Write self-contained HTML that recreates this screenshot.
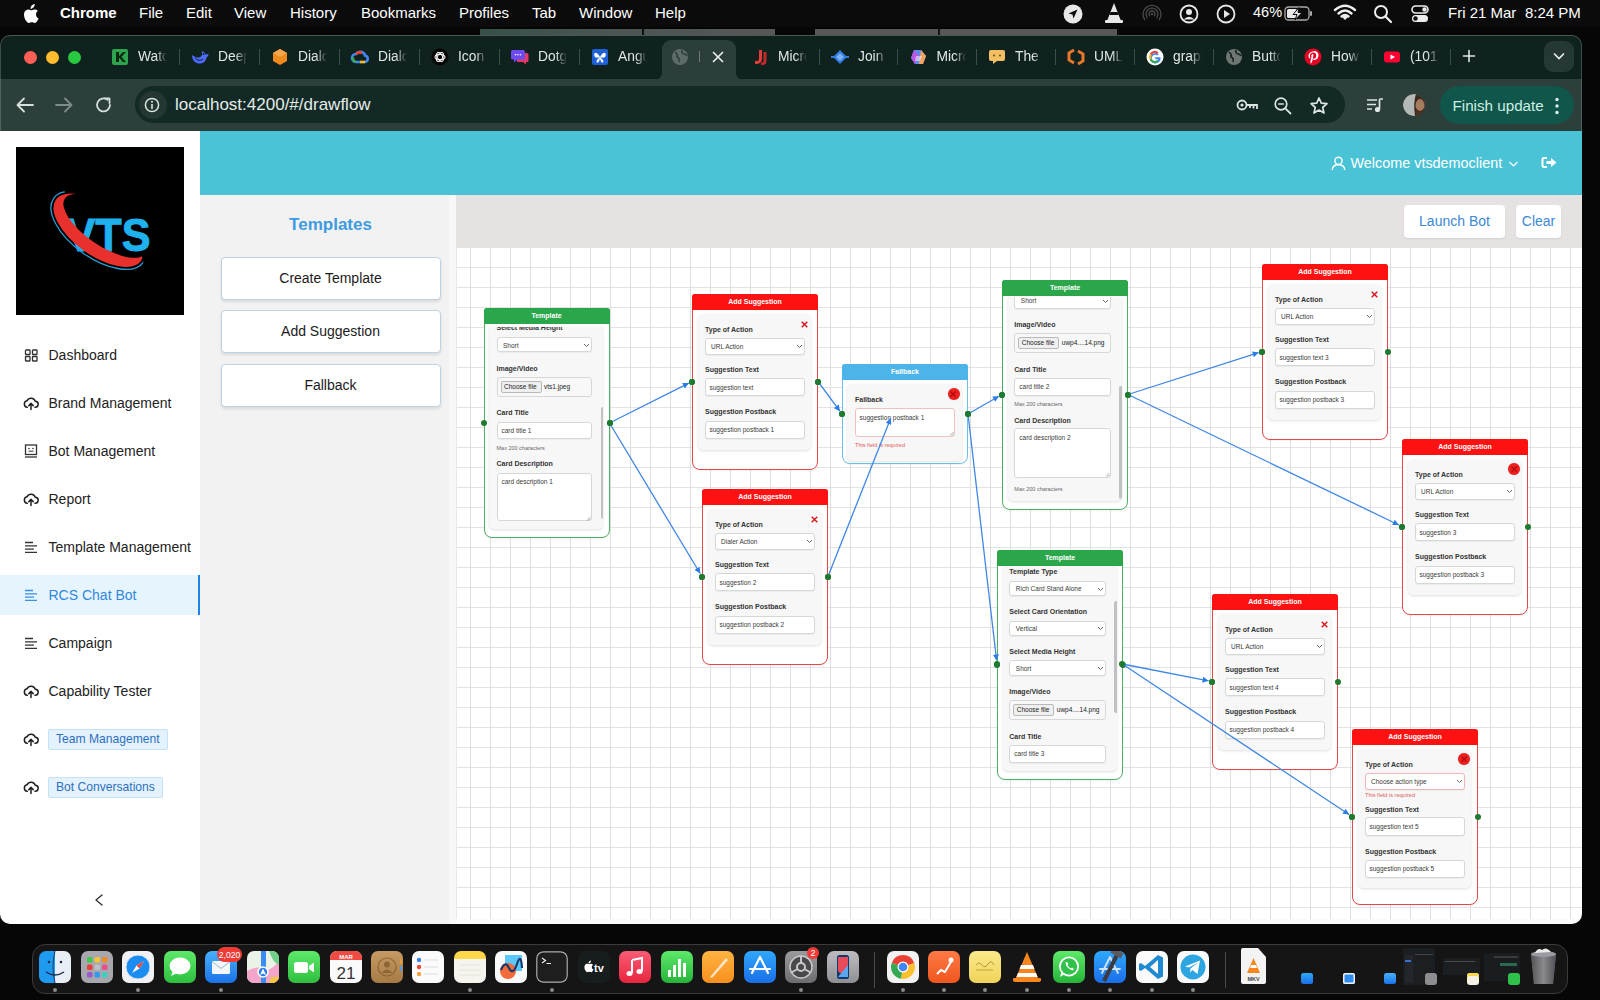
<!DOCTYPE html>
<html><head><meta charset="utf-8">
<style>
*{box-sizing:border-box;margin:0;padding:0}
html,body{width:1600px;height:1000px;overflow:hidden;background:#060606;font-family:"Liberation Sans",sans-serif;position:relative}
.a,.t{position:absolute}
.t{white-space:nowrap}
svg.a{overflow:visible}
#win{position:absolute;left:0;top:0;width:1582px;height:924px;clip-path:inset(35px 0 0 0 round 10px)}
</style></head><body>
<div class="a" style="left:0px;top:0px;width:1600px;height:27px;background:#0b0b0b"></div>
<div class="a" style="left:480px;top:29px;width:295px;height:6px;background:linear-gradient(90deg,#36504a,#4a5553 40%,#575757)"></div>
<div class="a" style="left:642px;top:29px;width:2px;height:6px;background:#111"></div>
<div class="a" style="left:815px;top:29px;width:302px;height:6px;background:#585858"></div>
<div class="a" style="left:938px;top:29px;width:2px;height:6px;background:#161616"></div>
<svg class="a" style="left:21px;top:4px;" width="18" height="20" viewBox="0 0 18 20"><path fill="#fff" d="M12.600 3.200c.8-1 1.300-2.200 1.200-3.200-1.100.1-2.300.7-3.100 1.600-.7.8-1.300 2-1.100 3.100 1.100.1 2.300-.6 3-1.500zM15 10.400c0-2.200 1.800-3.200 1.900-3.300-1-1.500-2.600-1.700-3.200-1.700-1.400-.1-2.600.8-3.300.8-.7 0-1.700-.8-2.900-.8C6 5.400 4.600 6.300 3.800 7.600c-1.600 2.800-.4 6.900 1.200 9.100.8 1.100 1.700 2.300 2.900 2.300 1.100 0 1.600-.7 2.900-.7 1.400 0 1.700.7 2.900.7 1.200 0 2-1.100 2.700-2.200.9-1.200 1.200-2.400 1.200-2.500-.1 0-2.600-1-2.600-3.900z"/></svg>
<div class="t" style="left:60px;top:4.90px;font-size:15px;line-height:15px;color:#fff;font-weight:bold;">Chrome</div>
<div class="t" style="left:139px;top:4.90px;font-size:15px;line-height:15px;color:#fff;font-weight:normal;">File</div>
<div class="t" style="left:186px;top:4.90px;font-size:15px;line-height:15px;color:#fff;font-weight:normal;">Edit</div>
<div class="t" style="left:234px;top:4.90px;font-size:15px;line-height:15px;color:#fff;font-weight:normal;">View</div>
<div class="t" style="left:290px;top:4.90px;font-size:15px;line-height:15px;color:#fff;font-weight:normal;">History</div>
<div class="t" style="left:361px;top:4.90px;font-size:15px;line-height:15px;color:#fff;font-weight:normal;">Bookmarks</div>
<div class="t" style="left:459px;top:4.90px;font-size:15px;line-height:15px;color:#fff;font-weight:normal;">Profiles</div>
<div class="t" style="left:532px;top:4.90px;font-size:15px;line-height:15px;color:#fff;font-weight:normal;">Tab</div>
<div class="t" style="left:579px;top:4.90px;font-size:15px;line-height:15px;color:#fff;font-weight:normal;">Window</div>
<div class="t" style="left:655px;top:4.90px;font-size:15px;line-height:15px;color:#fff;font-weight:normal;">Help</div>
<svg class="a" style="left:1062px;top:3px;" width="22" height="22" viewBox="0 0 22 22"><circle cx="11" cy="11" r="9.500" fill="#e8e8e8"/><path d="M15.500 6.500 L6.500 10.500 L10.500 11.500 L11.500 15.500 Z" fill="#0b0b0b"/></svg>
<svg class="a" style="left:1104px;top:2px;" width="20" height="23" viewBox="0 0 20 23"><path d="M10 1 L3 19 L17 19 Z" fill="#e8e8e8"/><path d="M6.500 10 L13.500 10 L14.500 13 L5.500 13 Z" fill="#0b0b0b"/><rect x="1" y="18" width="18" height="3" rx="1" fill="#e8e8e8"/></svg>
<svg class="a" style="left:1141px;top:3px;" width="22" height="22" viewBox="0 0 22 22"><g fill="none" stroke="#4a4a4a" stroke-width="1.300"><path d="M4 17 A9 9 0 1 1 18 17"/><path d="M6.500 15 A6 6 0 1 1 15.500 15"/><path d="M9 13 A3 3 0 1 1 13 13"/></g><circle cx="11" cy="11" r="1.200" fill="#4a4a4a"/></svg>
<svg class="a" style="left:1178px;top:3px;" width="22" height="22" viewBox="0 0 22 22"><circle cx="11" cy="11" r="8.500" fill="none" stroke="#e8e8e8" stroke-width="1.800"/><circle cx="11" cy="9" r="3" fill="#e8e8e8"/><path d="M5.500 16.500 Q11 11 16.500 16.500" fill="#e8e8e8"/></svg>
<svg class="a" style="left:1215px;top:3px;" width="22" height="22" viewBox="0 0 22 22"><circle cx="11" cy="11" r="8.500" fill="none" stroke="#e8e8e8" stroke-width="1.800"/><path d="M9 7 L15 11 L9 15 Z" fill="#e8e8e8"/></svg>
<div class="t" style="left:1253px;top:5.33px;font-size:14.5px;line-height:14.5px;color:#fff;font-weight:normal;">46%</div>
<svg class="a" style="left:1284px;top:5px;" width="30" height="17" viewBox="0 0 30 17"><rect x="1" y="2" width="24" height="13" rx="3.500" fill="none" stroke="#aaa" stroke-width="1.300"/><rect x="3" y="4" width="10" height="9" rx="1.500" fill="#e8e8e8"/><rect x="26" y="6" width="2" height="5" rx="1" fill="#aaa"/><path d="M15 2.500 L9 9.500 L13 9.500 L11 15 L18 7.500 L14 7.500 Z" fill="#e8e8e8" stroke="#0b0b0b" stroke-width="1"/></svg>
<svg class="a" style="left:1333px;top:4px;" width="24" height="18" viewBox="0 0 24 18"><path d="M12 16 L9 13 Q12 10.500 15 13 Z" fill="#eee"/><path d="M5.500 9.500 Q12 3.500 18.500 9.500" stroke="#eee" stroke-width="2.400" fill="none" stroke-linecap="round"/><path d="M2 6 Q12 -2.500 22 6" stroke="#eee" stroke-width="2.400" fill="none" stroke-linecap="round"/><path d="M8.500 12.500 Q12 9.500 15.500 12.500" stroke="#eee" stroke-width="2.400" fill="none" stroke-linecap="round"/></svg>
<svg class="a" style="left:1373px;top:4px;" width="20" height="20" viewBox="0 0 20 20"><circle cx="8" cy="8" r="6" fill="none" stroke="#eee" stroke-width="2"/><path d="M12.500 12.500 L18 18" stroke="#eee" stroke-width="2.200" stroke-linecap="round"/></svg>
<svg class="a" style="left:1410px;top:4px;" width="20" height="20" viewBox="0 0 20 20"><rect x="2" y="2" width="16" height="7" rx="3.500" fill="none" stroke="#eee" stroke-width="1.600"/><circle cx="14.500" cy="5.500" r="2.200" fill="#eee"/><rect x="2" y="11" width="16" height="7" rx="3.500" fill="#eee"/><circle cx="5.500" cy="14.500" r="2.200" fill="#0b0b0b"/></svg>
<div class="t" style="left:1448px;top:4.90px;font-size:15px;line-height:15px;color:#fff;font-weight:normal;">Fri 21 Mar</div>
<div class="t" style="left:1525px;top:4.90px;font-size:15px;line-height:15px;color:#fff;font-weight:normal;">8:24 PM</div>
<div id="win">
<div class="a" style="left:0px;top:35px;width:1582px;height:45px;background:#10221e;border-radius:10px 10px 0 0;box-shadow:inset 0 1px 0 #4a5754, inset 1px 0 0 #3c4e4a, inset -1px 0 0 #3c4e4a"></div>
<div class="a" style="left:23.5px;top:50.5px;width:13px;height:13px;background:#fe5f57;border-radius:50%"></div>
<div class="a" style="left:45.5px;top:50.5px;width:13px;height:13px;background:#febc2e;border-radius:50%"></div>
<div class="a" style="left:67.5px;top:50.5px;width:13px;height:13px;background:#28c840;border-radius:50%"></div>
<svg class="a" style="left:111px;top:48px;" width="18" height="18" viewBox="0 0 18 18"><rect x="1" y="1" width="16" height="16" rx="2" fill="#2ea44f"/><path d="M5 4h3v4l4-4h3l-4.5 5L15 14h-3.2L8 9.5V14H5z" fill="#0a2a10"/></svg>
<div class="t" style="left:138px;top:49.82px;font-size:13.8px;line-height:13.8px;color:#dfe7e4;font-weight:normal;width:29px;overflow:hidden;white-space:nowrap;-webkit-mask-image:linear-gradient(to right,#000 62%,transparent 100%)">Watch</div>
<svg class="a" style="left:191px;top:48px;" width="18" height="18" viewBox="0 0 18 18"><path d="M1 7 C1 13 5 16 10 15.500 C13 15 15 12.500 15.500 9.500 C16.500 9 17.500 7.500 17.500 5.500 C16.500 6.500 15.500 6.800 14.500 6.500 C14 4.500 12.500 3 10.500 3.500 C11.500 5 11.500 7 10 8.500 C8 10.500 4 9.500 1 7Z" fill="#4d6bfe"/><path d="M4 9.500 C6 13 10 13 12 11" stroke="#10221e" stroke-width="1" fill="none"/><circle cx="12.500" cy="6" r=".9" fill="#10221e"/></svg>
<div class="t" style="left:218px;top:49.82px;font-size:13.8px;line-height:13.8px;color:#dfe7e4;font-weight:normal;width:29px;overflow:hidden;white-space:nowrap;-webkit-mask-image:linear-gradient(to right,#000 62%,transparent 100%)">Deeps</div>
<svg class="a" style="left:271px;top:48px;" width="18" height="18" viewBox="0 0 18 18"><path d="M9 1 L16 5 L16 13 L9 17 L2 13 L2 5 Z" fill="#ef8a1c"/><path d="M2 5 L9 9 L16 5 L9 1Z" fill="#f7a64b"/></svg>
<div class="t" style="left:298px;top:49.82px;font-size:13.8px;line-height:13.8px;color:#dfe7e4;font-weight:normal;width:29px;overflow:hidden;white-space:nowrap;-webkit-mask-image:linear-gradient(to right,#000 62%,transparent 100%)">Dialog</div>
<svg class="a" style="left:351px;top:48px;" width="18" height="18" viewBox="0 0 18 18"><path d="M5 14 a4 4 0 0 1 0-8 a5 5 0 0 1 9 1.500 a3.300 3.300 0 0 1 0 6.500Z" fill="none" stroke="#4285f4" stroke-width="2.6"/><path d="M5 14 a4 4 0 0 1-3-5" stroke="#34a853" stroke-width="2.6" fill="none"/><path d="M5 6 a5 5 0 0 1 6-1" stroke="#ea4335" stroke-width="2.600" fill="none"/><path d="M14 14 h-5" stroke="#fbbc04" stroke-width="2.600"/></svg>
<div class="t" style="left:378px;top:49.82px;font-size:13.8px;line-height:13.8px;color:#dfe7e4;font-weight:normal;width:29px;overflow:hidden;white-space:nowrap;-webkit-mask-image:linear-gradient(to right,#000 62%,transparent 100%)">Dialog</div>
<svg class="a" style="left:431px;top:48px;" width="18" height="18" viewBox="0 0 18 18"><circle cx="9" cy="9" r="8.500" fill="#050505"/><g fill="none" stroke="#eee" stroke-width="1.100"><ellipse cx="9" cy="9" rx="5" ry="2.600"/><ellipse cx="9" cy="9" rx="5" ry="2.600" transform="rotate(60 9 9)"/><ellipse cx="9" cy="9" rx="5" ry="2.600" transform="rotate(120 9 9)"/></g></svg>
<div class="t" style="left:458px;top:49.82px;font-size:13.8px;line-height:13.8px;color:#dfe7e4;font-weight:normal;width:29px;overflow:hidden;white-space:nowrap;-webkit-mask-image:linear-gradient(to right,#000 62%,transparent 100%)">Icon </div>
<svg class="a" style="left:511px;top:48px;" width="18" height="18" viewBox="0 0 18 18"><path d="M6 5 h10 a1.500 1.500 0 0 1 1.500 1.500 v6 a1.500 1.500 0 0 1-1.500 1.500 h-1 v2.500 l-3-2.500 h-6z" fill="#e6396b"/><path d="M1.500 2 h11 a1.500 1.500 0 0 1 1.500 1.500 v6.500 a1.500 1.500 0 0 1-1.500 1.500 h-6 l-3.500 3 v-3 h-1.500 a1.500 1.500 0 0 1-1.500-1.500 v-6.500 a1.500 1.500 0 0 1 1.500-1.500z" fill="#6c4cf0"/><circle cx="4.500" cy="6.800" r=".8" fill="#fff"/><circle cx="7" cy="6.800" r=".8" fill="#fff"/><circle cx="9.500" cy="6.800" r=".8" fill="#fff"/></svg>
<div class="t" style="left:538px;top:49.82px;font-size:13.8px;line-height:13.8px;color:#dfe7e4;font-weight:normal;width:29px;overflow:hidden;white-space:nowrap;-webkit-mask-image:linear-gradient(to right,#000 62%,transparent 100%)">Dotgo</div>
<svg class="a" style="left:591px;top:48px;" width="18" height="18" viewBox="0 0 18 18"><rect x="1" y="1" width="16" height="16" rx="2" fill="#1d5fd6"/><path d="M9 9 C6 3 2 4 3.500 8 C4 10 6 10 9 9 C6 11 4 15 7 14.500 C8.500 14 9 11 9 9 C9 11 9.500 14 11 14.500 C14 15 12 11 9 9 C12 10 14 10 14.500 8 C16 4 12 3 9 9Z" fill="#fff"/></svg>
<div class="t" style="left:618px;top:49.82px;font-size:13.8px;line-height:13.8px;color:#dfe7e4;font-weight:normal;width:29px;overflow:hidden;white-space:nowrap;-webkit-mask-image:linear-gradient(to right,#000 62%,transparent 100%)">Angul</div>
<svg class="a" style="left:751px;top:48px;" width="18" height="18" viewBox="0 0 18 18"><path d="M8 2 h3 v9 a5 5 0 0 1-5 5 h-2 v-3 h2 a2 2 0 0 0 2-2z" fill="#e23b3b"/><path d="M12.500 4 h3 v9 a4 4 0 0 1-4 4 h-1.500 v-2.500 h1 a1.500 1.500 0 0 0 1.500-1.500z" fill="#c12a2a"/></svg>
<div class="t" style="left:778px;top:49.82px;font-size:13.8px;line-height:13.8px;color:#dfe7e4;font-weight:normal;width:29px;overflow:hidden;white-space:nowrap;-webkit-mask-image:linear-gradient(to right,#000 62%,transparent 100%)">Micro</div>
<svg class="a" style="left:831px;top:48px;" width="18" height="18" viewBox="0 0 18 18"><path d="M9 2 L16 9 L9 16 L2 9Z" fill="#2f7de1"/><path d="M5 9 L9 5 L13 9 L9 13Z" fill="#7fb2f5"/><path d="M0 9 h4 M14 9 h4" stroke="#2f7de1" stroke-width="2"/></svg>
<div class="t" style="left:858px;top:49.82px;font-size:13.8px;line-height:13.8px;color:#dfe7e4;font-weight:normal;width:29px;overflow:hidden;white-space:nowrap;-webkit-mask-image:linear-gradient(to right,#000 62%,transparent 100%)">Join </div>
<svg class="a" style="left:909.5px;top:48px;" width="18" height="18" viewBox="0 0 18 18"><path d="M4 2 h7 l5 6 -3 8 h-8 l-4-6z" fill="#5b8def"/><path d="M11 2 l5 6 -3 8 h-4z" fill="#f5a25d"/><path d="M4 2 l-3 8 4 6 4-8z" fill="#b857e6"/><path d="M6 8 h6 l-2 5 h-5z" fill="#fff" opacity=".5"/></svg>
<div class="t" style="left:936.5px;top:49.82px;font-size:13.8px;line-height:13.8px;color:#dfe7e4;font-weight:normal;width:29px;overflow:hidden;white-space:nowrap;-webkit-mask-image:linear-gradient(to right,#000 62%,transparent 100%)">Micro</div>
<svg class="a" style="left:988px;top:48px;" width="18" height="18" viewBox="0 0 18 18"><path d="M3 2 h12 a2 2 0 0 1 2 2 v7 a2 2 0 0 1-2 2 h-6 l-4 3 v-3 h-2 a2 2 0 0 1-2-2 v-7 a2 2 0 0 1 2-2z" fill="#f2c062"/><circle cx="6" cy="7.500" r="1" fill="#6b4a10"/><circle cx="12" cy="7.500" r="1" fill="#6b4a10"/></svg>
<div class="t" style="left:1015px;top:49.82px;font-size:13.8px;line-height:13.8px;color:#dfe7e4;font-weight:normal;width:29px;overflow:hidden;white-space:nowrap;-webkit-mask-image:linear-gradient(to right,#000 62%,transparent 100%)">The </div>
<svg class="a" style="left:1067px;top:48px;" width="18" height="18" viewBox="0 0 18 18"><path d="M7 2 L2 5 L2 12 L7 15" stroke="#e8762b" stroke-width="3" fill="none"/><path d="M11 3 L16 6 L16 13 L11 16" stroke="#e8762b" stroke-width="3" fill="none"/></svg>
<div class="t" style="left:1094px;top:49.82px;font-size:13.8px;line-height:13.8px;color:#dfe7e4;font-weight:normal;width:29px;overflow:hidden;white-space:nowrap;-webkit-mask-image:linear-gradient(to right,#000 62%,transparent 100%)">UML </div>
<svg class="a" style="left:1146px;top:48px;" width="18" height="18" viewBox="0 0 18 18"><circle cx="9" cy="9" r="8.500" fill="#fff"/><path d="M14.500 9.200 h-5.300 v2 h3 a3.300 3.300 0 1 1-.900-3.600 l1.400-1.400 a5.300 5.300 0 1 0 1.800 3z" fill="#4285f4"/><path d="M3.700 6.300 a5.300 5.300 0 0 1 8.800-1.800 l-1.400 1.400 a3.300 3.300 0 0 0-5.500 1.200z" fill="#ea4335"/><path d="M3.700 11.700 a5.300 5.300 0 0 1 0-5.400 l1.900 .8 a3.300 3.300 0 0 0 0 3.800z" fill="#fbbc04"/><path d="M12.500 13.500 a5.300 5.300 0 0 1-8.800-1.800 l1.900-.8 a3.300 3.300 0 0 0 5.400 1.200z" fill="#34a853"/></svg>
<div class="t" style="left:1173px;top:49.82px;font-size:13.8px;line-height:13.8px;color:#dfe7e4;font-weight:normal;width:29px;overflow:hidden;white-space:nowrap;-webkit-mask-image:linear-gradient(to right,#000 62%,transparent 100%)">graph</div>
<svg class="a" style="left:1225px;top:48px;" width="18" height="18" viewBox="0 0 18 18"><circle cx="9" cy="9" r="8" fill="#6e7674"/><path d="M4 4 q3 2 2 5 q3 1 2 5 M11 2 q-1 3 2 4 q2 0 3 2" stroke="#10221e" stroke-width="1.500" fill="none"/></svg>
<div class="t" style="left:1252px;top:49.82px;font-size:13.8px;line-height:13.8px;color:#dfe7e4;font-weight:normal;width:29px;overflow:hidden;white-space:nowrap;-webkit-mask-image:linear-gradient(to right,#000 62%,transparent 100%)">Butto</div>
<svg class="a" style="left:1304px;top:48px;" width="18" height="18" viewBox="0 0 18 18"><circle cx="9" cy="9" r="8.500" fill="#e60023"/><path d="M9.500 3.500 c-3.500 0-5 2.500-5 4.500 0 1.200.500 2.300 1.500 2.600 l.400-1.300 c-.300-.400-.500-.900-.500-1.400 0-1.800 1.300-3.300 3.400-3.300 1.900 0 2.900 1.100 2.900 2.600 0 2-.900 3.600-2.200 3.600-.700 0-1.300-.600-1.100-1.400.200-.900.600-1.900.600-2.500 0-.600-.300-1-.900-1-.700 0-1.300.800-1.300 1.800 0 .600.200 1.100.200 1.100 l-.900 3.700 c-.200 1-.100 2.200 0 3 l.300 .100 c.400-.600 1.200-1.800 1.400-2.700 l.500-1.900 c.300 .500 1 .900 1.800.900 2.300 0 3.900-2.100 3.900-4.900 0-2.100-1.800-4.100-4.600-4.100z" fill="#fff"/></svg>
<div class="t" style="left:1331px;top:49.82px;font-size:13.8px;line-height:13.8px;color:#dfe7e4;font-weight:normal;width:29px;overflow:hidden;white-space:nowrap;-webkit-mask-image:linear-gradient(to right,#000 62%,transparent 100%)">How </div>
<svg class="a" style="left:1383px;top:48px;" width="18" height="18" viewBox="0 0 18 18"><rect x="1" y="3.500" width="16" height="11" rx="3" fill="#ff0033"/><path d="M7.500 6.500 L12 9 L7.500 11.500Z" fill="#fff"/></svg>
<div class="t" style="left:1410px;top:49.82px;font-size:13.8px;line-height:13.8px;color:#dfe7e4;font-weight:normal;width:29px;overflow:hidden;white-space:nowrap;-webkit-mask-image:linear-gradient(to right,#000 62%,transparent 100%)">(101)</div>
<div class="a" style="left:179px;top:49px;width:1px;height:16px;background:#3c4e4a"></div>
<div class="a" style="left:259px;top:49px;width:1px;height:16px;background:#3c4e4a"></div>
<div class="a" style="left:339px;top:49px;width:1px;height:16px;background:#3c4e4a"></div>
<div class="a" style="left:419px;top:49px;width:1px;height:16px;background:#3c4e4a"></div>
<div class="a" style="left:499px;top:49px;width:1px;height:16px;background:#3c4e4a"></div>
<div class="a" style="left:579px;top:49px;width:1px;height:16px;background:#3c4e4a"></div>
<div class="a" style="left:819px;top:49px;width:1px;height:16px;background:#3c4e4a"></div>
<div class="a" style="left:897px;top:49px;width:1px;height:16px;background:#3c4e4a"></div>
<div class="a" style="left:976px;top:49px;width:1px;height:16px;background:#3c4e4a"></div>
<div class="a" style="left:1055px;top:49px;width:1px;height:16px;background:#3c4e4a"></div>
<div class="a" style="left:1134px;top:49px;width:1px;height:16px;background:#3c4e4a"></div>
<div class="a" style="left:1213px;top:49px;width:1px;height:16px;background:#3c4e4a"></div>
<div class="a" style="left:1292px;top:49px;width:1px;height:16px;background:#3c4e4a"></div>
<div class="a" style="left:1371px;top:49px;width:1px;height:16px;background:#3c4e4a"></div>
<div class="a" style="left:1450px;top:49px;width:1px;height:16px;background:#3c4e4a"></div>
<div class="a" style="left:662px;top:40px;width:74px;height:40px;background:#2b3e3a;border-radius:9px 9px 0 0"></div>
<div class="a" style="left:654px;top:72px;width:8px;height:8px;background:radial-gradient(circle at 0 0,#10221e 8px,#2b3e3a 8px)"></div>
<div class="a" style="left:736px;top:72px;width:8px;height:8px;background:radial-gradient(circle at 100% 0,#10221e 8px,#2b3e3a 8px)"></div>
<svg class="a" style="left:671px;top:48px;" width="18" height="18" viewBox="0 0 18 18"><circle cx="9" cy="9" r="8" fill="#5f6b68"/><path d="M4 4 q3 2 2 5 q3 1 2 5 M11 2 q-1 3 2 4 q2 0 3 2" stroke="#2b3e3a" stroke-width="1.500" fill="none"/></svg>
<div class="a" style="left:699px;top:51px;width:1px;height:11px;background:#6a7a76"></div>
<svg class="a" style="left:711px;top:50px;" width="14" height="14" viewBox="0 0 14 14"><path d="M2.500 2.500 L11.500 11.500 M11.500 2.500 L2.500 11.500" stroke="#e8eeec" stroke-width="1.700" stroke-linecap="round"/></svg>
<svg class="a" style="left:1462px;top:49px;" width="14" height="14" viewBox="0 0 14 14"><path d="M7 1.500 V12.500 M1.500 7 H12.500" stroke="#e0e8e5" stroke-width="1.600" stroke-linecap="round"/></svg>
<div class="a" style="left:1544px;top:41px;width:30px;height:31px;background:#263834;border-radius:9px"></div>
<svg class="a" style="left:1552px;top:50px;" width="14" height="12" viewBox="0 0 14 12"><path d="M2.500 4 L7 8.500 L11.500 4" stroke="#e8eeec" stroke-width="1.700" fill="none" stroke-linecap="round"/></svg>
<div class="a" style="left:0px;top:79px;width:1582px;height:52px;background:#2c3f3b;box-shadow:inset 1px 0 0 #4f625d, inset -1px 0 0 #4f625d"></div>
<svg class="a" style="left:14px;top:95px;" width="22" height="20" viewBox="0 0 22 20"><path d="M19 10 H4 M10 3.500 L3.500 10 L10 16.500" stroke="#d6e0dd" stroke-width="1.800" fill="none" stroke-linecap="round" stroke-linejoin="round"/></svg>
<svg class="a" style="left:53px;top:95px;" width="22" height="20" viewBox="0 0 22 20"><path d="M3 10 H18 M12 3.500 L18.500 10 L12 16.500" stroke="#7e8c89" stroke-width="1.800" fill="none" stroke-linecap="round" stroke-linejoin="round"/></svg>
<svg class="a" style="left:94px;top:95px;" width="20" height="20" viewBox="0 0 20 20"><path d="M16 10 A6.500 6.500 0 1 1 13.600 4.900" stroke="#d6e0dd" stroke-width="1.800" fill="none" stroke-linecap="round"/><path d="M10.500 3.300 L15.500 3.300 L15.500 8" stroke="#d6e0dd" stroke-width="1.800" fill="none" stroke-linecap="round" stroke-linejoin="round"/></svg>
<div class="a" style="left:135px;top:86px;width:1210px;height:37px;background:#132925;border-radius:19px"></div>
<div class="a" style="left:138.5px;top:90.5px;width:28px;height:28px;background:#243732;border-radius:50%"></div>
<svg class="a" style="left:144px;top:97px;" width="16" height="16" viewBox="0 0 16 16"><circle cx="8" cy="8" r="6.600" fill="none" stroke="#dbe5e2" stroke-width="1.500"/><rect x="7.200" y="7" width="1.600" height="5" fill="#dbe5e2"/><circle cx="8" cy="4.800" r="1" fill="#dbe5e2"/></svg>
<div class="t" style="left:175px;top:96.11px;font-size:17px;line-height:17px;color:#e4ece9;font-weight:normal;">localhost:4200/#/drawflow</div>
<svg class="a" style="left:1236px;top:97px;" width="24" height="16" viewBox="0 0 24 16"><circle cx="6" cy="8" r="4.500" fill="none" stroke="#dbe5e2" stroke-width="1.800"/><circle cx="6" cy="8" r="1.600" fill="#dbe5e2"/><path d="M10.500 8 H21 V12 M17.500 8 V11.500 M14 8 V11" stroke="#dbe5e2" stroke-width="1.800" fill="none"/></svg>
<svg class="a" style="left:1273px;top:96px;" width="20" height="20" viewBox="0 0 20 20"><circle cx="8" cy="8" r="5.800" fill="none" stroke="#dbe5e2" stroke-width="1.700"/><path d="M5.200 8 H10.800" stroke="#dbe5e2" stroke-width="1.700"/><path d="M12.300 12.300 L17.500 17.500" stroke="#dbe5e2" stroke-width="1.800" stroke-linecap="round"/></svg>
<svg class="a" style="left:1309px;top:96px;" width="20" height="20" viewBox="0 0 20 20"><path d="M10 2 L12.300 7.200 L18 7.700 L13.700 11.500 L15 17 L10 14.100 L5 17 L6.300 11.500 L2 7.700 L7.700 7.200 Z" fill="none" stroke="#dbe5e2" stroke-width="1.700" stroke-linejoin="round"/></svg>
<svg class="a" style="left:1365px;top:96px;" width="20" height="18" viewBox="0 0 20 18"><path d="M2 4 H12 M2 8.500 H11 M2 13 H7" stroke="#dbe5e2" stroke-width="1.700"/><path d="M14.500 3 V13" stroke="#dbe5e2" stroke-width="1.700"/><path d="M14.500 3 H18" stroke="#dbe5e2" stroke-width="1.700"/><circle cx="12.500" cy="13.500" r="2.600" fill="#dbe5e2"/></svg>
<svg class="a" style="left:1403px;top:94px;" width="22" height="22" viewBox="0 0 22 22"><defs><clipPath id="avc"><circle cx="11" cy="11" r="11"/></clipPath></defs><g clip-path="url(#avc)"><rect width="22" height="22" fill="#2c3f3b"/><circle cx="11" cy="11" r="11" fill="#b4b8b6"/><path d="M13 0 Q10 8 12 22 H22 V0Z" fill="#3a2a20"/><ellipse cx="17" cy="11.500" rx="4.500" ry="6.500" fill="#a67c5f"/><path d="M13 14 Q17 20 21 14 V22 H13Z" fill="#4a2f22"/></g></svg>
<div class="a" style="left:1440px;top:86px;width:134px;height:38px;background:#10564a;border-radius:19px"></div>
<div class="t" style="left:1452.5px;top:97.63px;font-size:15.2px;line-height:15.2px;color:#cdeee4;font-weight:normal;">Finish update</div>
<svg class="a" style="left:1553px;top:96px;" width="8" height="20" viewBox="0 0 8 20"><circle cx="4" cy="3.500" r="1.700" fill="#d7efe8"/><circle cx="4" cy="10" r="1.700" fill="#d7efe8"/><circle cx="4" cy="16.500" r="1.700" fill="#d7efe8"/></svg>
<div class="a" style="left:0px;top:131px;width:200px;height:793px;background:#fff"></div>
<div class="a" style="left:16px;top:147px;width:168px;height:168px;background:#000"></div>
<svg class="a" style="left:16px;top:147px;" width="168" height="168" viewBox="0 0 168 168"><defs><mask id="cres" maskUnits="userSpaceOnUse" x="0" y="0" width="168" height="168"><rect x="0" y="0" width="168" height="168" fill="#000"/><ellipse cx="82.500" cy="83.300" rx="52.500" ry="25" transform="rotate(35.600 82.500 83.300)" fill="#fff"/><ellipse cx="89.500" cy="78.800" rx="49" ry="20" transform="rotate(34 89.500 78.800)" fill="#000"/><path d="M90 0 L168 0 L168 168 L132 168 L126 109 L92 62 Z" fill="#000"/></mask><mask id="blu" maskUnits="userSpaceOnUse" x="0" y="0" width="168" height="168"><rect x="0" y="0" width="168" height="168" fill="#fff"/><path d="M30 0 L168 0 L168 168 L132 168 L127 112 L48 44 Z" fill="#000"/></mask></defs><text x="50.500" y="103.500" font-family="Liberation Sans" font-weight="bold" font-size="47" fill="#1fb0ee" stroke="#1fb0ee" stroke-width="1" textLength="84" lengthAdjust="spacingAndGlyphs">VTS</text><g mask="url(#blu)"><ellipse cx="82.500" cy="83.300" rx="55" ry="27.500" transform="rotate(35.600 82.500 83.300)" fill="none" stroke="#2a9fd8" stroke-width="1.300"/></g><rect x="0" y="0" width="168" height="168" fill="#e8302c" mask="url(#cres)"/></svg>
<svg class="a" style="left:24px;top:349px;" width="14" height="13" viewBox="0 0 14 13"><g fill="none" stroke="#333" stroke-width="1.300"><rect x="1.500" y="1" width="4.500" height="4.500" rx=".6"/><rect x="8.500" y="1" width="4.500" height="4.500" rx=".6"/><rect x="1.500" y="7.500" width="4.500" height="4.500" rx=".6"/><rect x="8.500" y="7.500" width="4.500" height="4.500" rx=".6"/></g></svg>
<div class="t" style="left:48.5px;top:348.15px;font-size:14px;line-height:14px;color:#222;font-weight:normal;">Dashboard</div>
<svg class="a" style="left:23px;top:396px;" width="16" height="14" viewBox="0 0 16 14"><path d="M4.200 11.300 A3.300 3.300 0 0 1 4 4.800 A4.500 4.500 0 0 1 12.300 5.300 A3 3 0 0 1 12 11.300" fill="none" stroke="#222" stroke-width="1.500" stroke-linecap="round"/><path d="M8 13.500 V7.500 M5.800 9.600 L8 7.400 L10.200 9.600" fill="none" stroke="#222" stroke-width="1.500" stroke-linecap="round" stroke-linejoin="round"/></svg>
<div class="t" style="left:48.5px;top:396.15px;font-size:14px;line-height:14px;color:#222;font-weight:normal;">Brand Management</div>
<svg class="a" style="left:24px;top:444px;" width="14" height="14" viewBox="0 0 14 14"><rect x="1.500" y="1" width="11" height="9.500" fill="none" stroke="#333" stroke-width="1.300"/><path d="M1 13 H13" stroke="#333" stroke-width="1.300"/><circle cx="5" cy="4.500" r=".8" fill="#333"/><circle cx="9" cy="4.500" r=".8" fill="#333"/><path d="M4.500 7.200 H9.500" stroke="#333" stroke-width="1"/></svg>
<div class="t" style="left:48.5px;top:444.15px;font-size:14px;line-height:14px;color:#222;font-weight:normal;">Bot Management</div>
<svg class="a" style="left:23px;top:492px;" width="16" height="14" viewBox="0 0 16 14"><path d="M4.200 11.300 A3.300 3.300 0 0 1 4 4.800 A4.500 4.500 0 0 1 12.300 5.300 A3 3 0 0 1 12 11.300" fill="none" stroke="#222" stroke-width="1.500" stroke-linecap="round"/><path d="M8 13.500 V7.500 M5.800 9.600 L8 7.400 L10.200 9.600" fill="none" stroke="#222" stroke-width="1.500" stroke-linecap="round" stroke-linejoin="round"/></svg>
<div class="t" style="left:48.5px;top:492.15px;font-size:14px;line-height:14px;color:#222;font-weight:normal;">Report</div>
<svg class="a" style="left:24px;top:541px;" width="14" height="13" viewBox="0 0 14 13"><path d="M1 1.500 H9 M1 4.800 H13 M1 8.100 H10 M1 11.400 H13" stroke="#333" stroke-width="1.300"/></svg>
<div class="t" style="left:48.5px;top:540.15px;font-size:14px;line-height:14px;color:#222;font-weight:normal;">Template Management</div>
<div class="a" style="left:0px;top:575px;width:200px;height:40px;background:#e6f4fe"></div>
<div class="a" style="left:198px;top:575px;width:2px;height:40px;background:#1c84e3"></div>
<svg class="a" style="left:24px;top:589px;" width="14" height="13" viewBox="0 0 14 13"><path d="M1 1.500 H9 M1 4.800 H13 M1 8.100 H10 M1 11.400 H13" stroke="#3a8fe0" stroke-width="1.300"/></svg>
<div class="t" style="left:48.5px;top:587.65px;font-size:14px;line-height:14px;color:#2f87e0;font-weight:normal;">RCS Chat Bot</div>
<svg class="a" style="left:24px;top:637px;" width="14" height="13" viewBox="0 0 14 13"><path d="M1 1.500 H9 M1 4.800 H13 M1 8.100 H10 M1 11.400 H13" stroke="#333" stroke-width="1.300"/></svg>
<div class="t" style="left:48.5px;top:636.15px;font-size:14px;line-height:14px;color:#222;font-weight:normal;">Campaign</div>
<svg class="a" style="left:23px;top:684px;" width="16" height="14" viewBox="0 0 16 14"><path d="M4.200 11.300 A3.300 3.300 0 0 1 4 4.800 A4.500 4.500 0 0 1 12.300 5.300 A3 3 0 0 1 12 11.300" fill="none" stroke="#222" stroke-width="1.500" stroke-linecap="round"/><path d="M8 13.500 V7.500 M5.800 9.600 L8 7.400 L10.200 9.600" fill="none" stroke="#222" stroke-width="1.500" stroke-linecap="round" stroke-linejoin="round"/></svg>
<div class="t" style="left:48.5px;top:684.15px;font-size:14px;line-height:14px;color:#222;font-weight:normal;">Capability Tester</div>
<svg class="a" style="left:23px;top:732px;" width="16" height="14" viewBox="0 0 16 14"><path d="M4.200 11.300 A3.300 3.300 0 0 1 4 4.800 A4.500 4.500 0 0 1 12.300 5.300 A3 3 0 0 1 12 11.300" fill="none" stroke="#222" stroke-width="1.500" stroke-linecap="round"/><path d="M8 13.500 V7.500 M5.800 9.600 L8 7.400 L10.200 9.600" fill="none" stroke="#222" stroke-width="1.500" stroke-linecap="round" stroke-linejoin="round"/></svg>
<div class="a" style="left:48px;top:728.8px;width:120px;height:21px;background:#e4f2fd;border:1px solid #c3e1f7;border-radius:2px"></div>
<div class="t" style="left:56px;top:733.46px;font-size:12.1px;line-height:12.1px;color:#2d6fbd;font-weight:normal;">Team Management</div>
<svg class="a" style="left:23px;top:780px;" width="16" height="14" viewBox="0 0 16 14"><path d="M4.200 11.300 A3.300 3.300 0 0 1 4 4.800 A4.500 4.500 0 0 1 12.300 5.300 A3 3 0 0 1 12 11.300" fill="none" stroke="#222" stroke-width="1.500" stroke-linecap="round"/><path d="M8 13.500 V7.500 M5.800 9.600 L8 7.400 L10.200 9.600" fill="none" stroke="#222" stroke-width="1.500" stroke-linecap="round" stroke-linejoin="round"/></svg>
<div class="a" style="left:48px;top:776.8px;width:114.5px;height:21px;background:#e4f2fd;border:1px solid #c3e1f7;border-radius:2px"></div>
<div class="t" style="left:56px;top:781.46px;font-size:12.1px;line-height:12.1px;color:#2d6fbd;font-weight:normal;">Bot Conversations</div>
<svg class="a" style="left:92px;top:893px;" width="14" height="14" viewBox="0 0 14 14"><path d="M10 2 L4 7 L10 12" fill="none" stroke="#333" stroke-width="1.400" stroke-linecap="round" stroke-linejoin="round"/></svg>
<div class="a" style="left:200px;top:131px;width:1382px;height:64px;background:#4ac3d7"></div>
<svg class="a" style="left:1331px;top:156px;" width="15" height="15" viewBox="0 0 15 15"><circle cx="7.500" cy="4.800" r="3.600" fill="none" stroke="#fff" stroke-width="1.400"/><path d="M1.200 14 Q1.500 8.700 7.500 8.700 Q13.500 8.700 13.800 14" fill="none" stroke="#fff" stroke-width="1.400"/></svg>
<div class="t" style="left:1350.5px;top:155.81px;font-size:14.4px;line-height:14.4px;color:#fff;font-weight:normal;">Welcome vtsdemoclient</div>
<svg class="a" style="left:1508px;top:160px;" width="11" height="8" viewBox="0 0 11 8"><path d="M1.500 2 L5.500 6 L9.500 2" fill="none" stroke="#fff" stroke-width="1.200"/></svg>
<svg class="a" style="left:1541px;top:156px;" width="17" height="13" viewBox="0 0 17 13"><path d="M6 2 H3 a1.500 1.500 0 0 0-1.500 1.500 v6 a1.500 1.500 0 0 0 1.500 1.500 H6" fill="none" stroke="#fff" stroke-width="2"/><path d="M5.500 5 H10 V2 L15.500 6.500 L10 11 V8 H5.500Z" fill="#fff"/></svg>
<div class="a" style="left:200px;top:195px;width:256px;height:729px;background:#f2f2f2"></div>
<div class="t" style="left:30.5px;width:600px;text-align:center;top:215.61px;font-size:17px;line-height:17px;color:#3d9be0;font-weight:bold;">Templates</div>
<div class="a" style="left:220.5px;top:257px;width:220px;height:43px;background:#fff;border:1px solid #bcd3e6;border-radius:4px;box-shadow:0 2px 3px rgba(0,0,0,.10)"></div>
<div class="t" style="left:30.5px;width:600px;text-align:center;top:271.15px;font-size:14px;line-height:14px;color:#1b1b1b;font-weight:normal;">Create Template</div>
<div class="a" style="left:220.5px;top:310px;width:220px;height:43px;background:#fff;border:1px solid #bcd3e6;border-radius:4px;box-shadow:0 2px 3px rgba(0,0,0,.10)"></div>
<div class="t" style="left:30.5px;width:600px;text-align:center;top:324.15px;font-size:14px;line-height:14px;color:#1b1b1b;font-weight:normal;">Add Suggestion</div>
<div class="a" style="left:220.5px;top:363.5px;width:220px;height:43px;background:#fff;border:1px solid #bcd3e6;border-radius:4px;box-shadow:0 2px 3px rgba(0,0,0,.10)"></div>
<div class="t" style="left:30.5px;width:600px;text-align:center;top:377.65px;font-size:14px;line-height:14px;color:#1b1b1b;font-weight:normal;">Fallback</div>
<div class="a" style="left:449px;top:195px;width:7px;height:729px;background:#f7f7f7"></div>
<div class="a" style="left:456px;top:195px;width:1126px;height:53px;background:#e5e2e1"></div>
<div class="a" style="left:1404px;top:205px;width:101px;height:33px;background:#fff;border-radius:4px;box-shadow:0 1px 2px rgba(0,0,0,.08)"></div>
<div class="t" style="left:1154.5px;width:600px;text-align:center;top:213.95px;font-size:14px;line-height:14px;color:#3b88d4;font-weight:normal;">Launch Bot</div>
<div class="a" style="left:1516px;top:205px;width:45px;height:33px;background:#fff;border-radius:4px;box-shadow:0 1px 2px rgba(0,0,0,.08)"></div>
<div class="t" style="left:1238.5px;width:600px;text-align:center;top:213.95px;font-size:14px;line-height:14px;color:#3b88d4;font-weight:normal;">Clear</div>
<div class="a" style="left:456px;top:248px;width:1126px;height:671px;background-color:#fff;background-image:linear-gradient(to right,#dfdfdf 1px,transparent 1px),linear-gradient(to bottom,#e3e3e3 1px,transparent 1px);background-size:20px 20px;background-position:14px 19px;box-shadow:inset 1px 0 0 #e8e8e8"></div>
<div class="a" style="left:456px;top:919px;width:1126px;height:5px;background:#fafafa"></div>
<div class="a" style="left:692px;top:294px;width:126px;height:176px;background:#fff;border:1px solid #e54848;border-radius:3px 3px 8px 8px;box-shadow:0 1px 2px rgba(0,0,0,.06)"><div class="a" style="left:-1px;top:-1px;width:126px;height:16px;background:#fe1111;border-radius:3px 3px 0 0"></div><div class="t" style="left:-238.0px;width:600px;text-align:center;top:3.27px;font-size:7px;line-height:7px;color:#fff;font-weight:bold;">Add Suggestion</div><div class="a" style="left:4.5px;top:19px;width:113px;height:136px;background:#f7f7f7;border-radius:5px;box-shadow:0 1px 3px rgba(0,0,0,.13)"></div><svg class="a" style="left:107.5px;top:25.5px;" width="7" height="7" viewBox="0 0 7 7"><path d="M.700 .700 L6.300 6.300 M6.300 .700 L.700 6.300" stroke="#d9141c" stroke-width="1.400"/></svg><div class="t" style="left:12px;top:31.27px;font-size:7px;line-height:7px;color:#333;font-weight:bold;">Type of Action</div><div class="a" style="left:11.5px;top:43px;width:100px;height:16.5px;background:#fff;border:1px solid #d3dad6;border-radius:3px;box-shadow:0 1px 1px rgba(0,0,0,.05)"></div><div class="t" style="left:18.0px;top:49.15px;font-size:6.5px;line-height:6.5px;color:#3a3a3a;font-weight:normal;">URL Action</div><svg class="a" style="left:102.5px;top:49.25px;" width="7" height="5" viewBox="0 0 7 5"><path d="M1 1 L3.500 3.500 L6 1" fill="none" stroke="#555" stroke-width=".9"/></svg><div class="t" style="left:12px;top:71.27px;font-size:7px;line-height:7px;color:#333;font-weight:bold;">Suggestion Text</div><div class="a" style="left:11.5px;top:83px;width:100px;height:18.4px;background:#fff;border:1px solid #d3dad6;border-radius:3px;box-shadow:0 1px 1px rgba(0,0,0,.05)"></div><div class="t" style="left:16.5px;top:89.70px;font-size:6.5px;line-height:6.5px;color:#3a3a3a;font-weight:normal;">suggestion text</div><div class="t" style="left:12px;top:113.47px;font-size:7px;line-height:7px;color:#333;font-weight:bold;">Suggestion Postback</div><div class="a" style="left:11.5px;top:125.5px;width:100px;height:18.2px;background:#fff;border:1px solid #d3dad6;border-radius:3px;box-shadow:0 1px 1px rgba(0,0,0,.05)"></div><div class="t" style="left:16.5px;top:132.10px;font-size:6.5px;line-height:6.5px;color:#3a3a3a;font-weight:normal;">suggestion postback 1</div></div><svg class="a" style="left:688px;top:377.5px;" width="8" height="8" viewBox="0 0 8 8"><circle cx="4" cy="4" r="3" fill="#1d7a2e"/></svg><svg class="a" style="left:814px;top:377.5px;" width="8" height="8" viewBox="0 0 8 8"><circle cx="4" cy="4" r="3" fill="#1d7a2e"/></svg>
<div class="a" style="left:702px;top:489px;width:126px;height:176px;background:#fff;border:1px solid #e54848;border-radius:3px 3px 8px 8px;box-shadow:0 1px 2px rgba(0,0,0,.06)"><div class="a" style="left:-1px;top:-1px;width:126px;height:16px;background:#fe1111;border-radius:3px 3px 0 0"></div><div class="t" style="left:-238.0px;width:600px;text-align:center;top:3.27px;font-size:7px;line-height:7px;color:#fff;font-weight:bold;">Add Suggestion</div><div class="a" style="left:4.5px;top:19px;width:113px;height:136px;background:#f7f7f7;border-radius:5px;box-shadow:0 1px 3px rgba(0,0,0,.13)"></div><svg class="a" style="left:107.5px;top:25.5px;" width="7" height="7" viewBox="0 0 7 7"><path d="M.700 .700 L6.300 6.300 M6.300 .700 L.700 6.300" stroke="#d9141c" stroke-width="1.400"/></svg><div class="t" style="left:12px;top:31.27px;font-size:7px;line-height:7px;color:#333;font-weight:bold;">Type of Action</div><div class="a" style="left:11.5px;top:43px;width:100px;height:16.5px;background:#fff;border:1px solid #d3dad6;border-radius:3px;box-shadow:0 1px 1px rgba(0,0,0,.05)"></div><div class="t" style="left:18.0px;top:49.15px;font-size:6.5px;line-height:6.5px;color:#3a3a3a;font-weight:normal;">Dialer Action</div><svg class="a" style="left:102.5px;top:49.25px;" width="7" height="5" viewBox="0 0 7 5"><path d="M1 1 L3.500 3.500 L6 1" fill="none" stroke="#555" stroke-width=".9"/></svg><div class="t" style="left:12px;top:71.27px;font-size:7px;line-height:7px;color:#333;font-weight:bold;">Suggestion Text</div><div class="a" style="left:11.5px;top:83px;width:100px;height:18.4px;background:#fff;border:1px solid #d3dad6;border-radius:3px;box-shadow:0 1px 1px rgba(0,0,0,.05)"></div><div class="t" style="left:16.5px;top:89.70px;font-size:6.5px;line-height:6.5px;color:#3a3a3a;font-weight:normal;">suggestion 2</div><div class="t" style="left:12px;top:113.47px;font-size:7px;line-height:7px;color:#333;font-weight:bold;">Suggestion Postback</div><div class="a" style="left:11.5px;top:125.5px;width:100px;height:18.2px;background:#fff;border:1px solid #d3dad6;border-radius:3px;box-shadow:0 1px 1px rgba(0,0,0,.05)"></div><div class="t" style="left:16.5px;top:132.10px;font-size:6.5px;line-height:6.5px;color:#3a3a3a;font-weight:normal;">suggestion postback 2</div></div><svg class="a" style="left:698px;top:572.5px;" width="8" height="8" viewBox="0 0 8 8"><circle cx="4" cy="4" r="3" fill="#1d7a2e"/></svg><svg class="a" style="left:824px;top:572.5px;" width="8" height="8" viewBox="0 0 8 8"><circle cx="4" cy="4" r="3" fill="#1d7a2e"/></svg>
<div class="a" style="left:1262px;top:264px;width:126px;height:176px;background:#fff;border:1px solid #e54848;border-radius:3px 3px 8px 8px;box-shadow:0 1px 2px rgba(0,0,0,.06)"><div class="a" style="left:-1px;top:-1px;width:126px;height:16px;background:#fe1111;border-radius:3px 3px 0 0"></div><div class="t" style="left:-238.0px;width:600px;text-align:center;top:3.27px;font-size:7px;line-height:7px;color:#fff;font-weight:bold;">Add Suggestion</div><div class="a" style="left:4.5px;top:19px;width:113px;height:136px;background:#f7f7f7;border-radius:5px;box-shadow:0 1px 3px rgba(0,0,0,.13)"></div><svg class="a" style="left:107.5px;top:25.5px;" width="7" height="7" viewBox="0 0 7 7"><path d="M.700 .700 L6.300 6.300 M6.300 .700 L.700 6.300" stroke="#d9141c" stroke-width="1.400"/></svg><div class="t" style="left:12px;top:31.27px;font-size:7px;line-height:7px;color:#333;font-weight:bold;">Type of Action</div><div class="a" style="left:11.5px;top:43px;width:100px;height:16.5px;background:#fff;border:1px solid #d3dad6;border-radius:3px;box-shadow:0 1px 1px rgba(0,0,0,.05)"></div><div class="t" style="left:18.0px;top:49.15px;font-size:6.5px;line-height:6.5px;color:#3a3a3a;font-weight:normal;">URL Action</div><svg class="a" style="left:102.5px;top:49.25px;" width="7" height="5" viewBox="0 0 7 5"><path d="M1 1 L3.500 3.500 L6 1" fill="none" stroke="#555" stroke-width=".9"/></svg><div class="t" style="left:12px;top:71.27px;font-size:7px;line-height:7px;color:#333;font-weight:bold;">Suggestion Text</div><div class="a" style="left:11.5px;top:83px;width:100px;height:18.4px;background:#fff;border:1px solid #d3dad6;border-radius:3px;box-shadow:0 1px 1px rgba(0,0,0,.05)"></div><div class="t" style="left:16.5px;top:89.70px;font-size:6.5px;line-height:6.5px;color:#3a3a3a;font-weight:normal;">suggestion text 3</div><div class="t" style="left:12px;top:113.47px;font-size:7px;line-height:7px;color:#333;font-weight:bold;">Suggestion Postback</div><div class="a" style="left:11.5px;top:125.5px;width:100px;height:18.2px;background:#fff;border:1px solid #d3dad6;border-radius:3px;box-shadow:0 1px 1px rgba(0,0,0,.05)"></div><div class="t" style="left:16.5px;top:132.10px;font-size:6.5px;line-height:6.5px;color:#3a3a3a;font-weight:normal;">suggestion postback 3</div></div><svg class="a" style="left:1258px;top:347.5px;" width="8" height="8" viewBox="0 0 8 8"><circle cx="4" cy="4" r="3" fill="#1d7a2e"/></svg><svg class="a" style="left:1384px;top:347.5px;" width="8" height="8" viewBox="0 0 8 8"><circle cx="4" cy="4" r="3" fill="#1d7a2e"/></svg>
<div class="a" style="left:1402px;top:439px;width:126px;height:176px;background:#fff;border:1px solid #e54848;border-radius:3px 3px 8px 8px;box-shadow:0 1px 2px rgba(0,0,0,.06)"><div class="a" style="left:-1px;top:-1px;width:126px;height:16px;background:#fe1111;border-radius:3px 3px 0 0"></div><div class="t" style="left:-238.0px;width:600px;text-align:center;top:3.27px;font-size:7px;line-height:7px;color:#fff;font-weight:bold;">Add Suggestion</div><div class="a" style="left:4.5px;top:19px;width:113px;height:136px;background:#f7f7f7;border-radius:5px;box-shadow:0 1px 3px rgba(0,0,0,.13)"></div><div class="a" style="left:105px;top:23px;width:12px;height:12px;background:#f31f1f;border-radius:50%;box-shadow:0 0 1px rgba(0,0,0,.3)"></div><svg class="a" style="left:107.8px;top:25.8px;" width="6.4" height="6.4" viewBox="0 0 6.4 6.4"><path d="M.500 .500 L5.900 5.900 M5.900 .500 L.500 5.900" stroke="#a80d0d" stroke-width="1.200"/></svg><div class="t" style="left:12px;top:31.27px;font-size:7px;line-height:7px;color:#333;font-weight:bold;">Type of Action</div><div class="a" style="left:11.5px;top:43px;width:100px;height:16.5px;background:#fff;border:1px solid #d3dad6;border-radius:3px;box-shadow:0 1px 1px rgba(0,0,0,.05)"></div><div class="t" style="left:18.0px;top:49.15px;font-size:6.5px;line-height:6.5px;color:#3a3a3a;font-weight:normal;">URL Action</div><svg class="a" style="left:102.5px;top:49.25px;" width="7" height="5" viewBox="0 0 7 5"><path d="M1 1 L3.500 3.500 L6 1" fill="none" stroke="#555" stroke-width=".9"/></svg><div class="t" style="left:12px;top:71.27px;font-size:7px;line-height:7px;color:#333;font-weight:bold;">Suggestion Text</div><div class="a" style="left:11.5px;top:83px;width:100px;height:18.4px;background:#fff;border:1px solid #d3dad6;border-radius:3px;box-shadow:0 1px 1px rgba(0,0,0,.05)"></div><div class="t" style="left:16.5px;top:89.70px;font-size:6.5px;line-height:6.5px;color:#3a3a3a;font-weight:normal;">suggestion 3</div><div class="t" style="left:12px;top:113.47px;font-size:7px;line-height:7px;color:#333;font-weight:bold;">Suggestion Postback</div><div class="a" style="left:11.5px;top:125.5px;width:100px;height:18.2px;background:#fff;border:1px solid #d3dad6;border-radius:3px;box-shadow:0 1px 1px rgba(0,0,0,.05)"></div><div class="t" style="left:16.5px;top:132.10px;font-size:6.5px;line-height:6.5px;color:#3a3a3a;font-weight:normal;">suggestion postback 3</div></div><svg class="a" style="left:1398px;top:522.5px;" width="8" height="8" viewBox="0 0 8 8"><circle cx="4" cy="4" r="3" fill="#1d7a2e"/></svg><svg class="a" style="left:1524px;top:522.5px;" width="8" height="8" viewBox="0 0 8 8"><circle cx="4" cy="4" r="3" fill="#1d7a2e"/></svg>
<div class="a" style="left:1212px;top:594px;width:126px;height:176px;background:#fff;border:1px solid #e54848;border-radius:3px 3px 8px 8px;box-shadow:0 1px 2px rgba(0,0,0,.06)"><div class="a" style="left:-1px;top:-1px;width:126px;height:16px;background:#fe1111;border-radius:3px 3px 0 0"></div><div class="t" style="left:-238.0px;width:600px;text-align:center;top:3.27px;font-size:7px;line-height:7px;color:#fff;font-weight:bold;">Add Suggestion</div><div class="a" style="left:4.5px;top:19px;width:113px;height:136px;background:#f7f7f7;border-radius:5px;box-shadow:0 1px 3px rgba(0,0,0,.13)"></div><svg class="a" style="left:107.5px;top:25.5px;" width="7" height="7" viewBox="0 0 7 7"><path d="M.700 .700 L6.300 6.300 M6.300 .700 L.700 6.300" stroke="#d9141c" stroke-width="1.400"/></svg><div class="t" style="left:12px;top:31.27px;font-size:7px;line-height:7px;color:#333;font-weight:bold;">Type of Action</div><div class="a" style="left:11.5px;top:43px;width:100px;height:16.5px;background:#fff;border:1px solid #d3dad6;border-radius:3px;box-shadow:0 1px 1px rgba(0,0,0,.05)"></div><div class="t" style="left:18.0px;top:49.15px;font-size:6.5px;line-height:6.5px;color:#3a3a3a;font-weight:normal;">URL Action</div><svg class="a" style="left:102.5px;top:49.25px;" width="7" height="5" viewBox="0 0 7 5"><path d="M1 1 L3.500 3.500 L6 1" fill="none" stroke="#555" stroke-width=".9"/></svg><div class="t" style="left:12px;top:71.27px;font-size:7px;line-height:7px;color:#333;font-weight:bold;">Suggestion Text</div><div class="a" style="left:11.5px;top:83px;width:100px;height:18.4px;background:#fff;border:1px solid #d3dad6;border-radius:3px;box-shadow:0 1px 1px rgba(0,0,0,.05)"></div><div class="t" style="left:16.5px;top:89.70px;font-size:6.5px;line-height:6.5px;color:#3a3a3a;font-weight:normal;">suggestion text 4</div><div class="t" style="left:12px;top:113.47px;font-size:7px;line-height:7px;color:#333;font-weight:bold;">Suggestion Postback</div><div class="a" style="left:11.5px;top:125.5px;width:100px;height:18.2px;background:#fff;border:1px solid #d3dad6;border-radius:3px;box-shadow:0 1px 1px rgba(0,0,0,.05)"></div><div class="t" style="left:16.5px;top:132.10px;font-size:6.5px;line-height:6.5px;color:#3a3a3a;font-weight:normal;">suggestion postback 4</div></div><svg class="a" style="left:1208px;top:677.5px;" width="8" height="8" viewBox="0 0 8 8"><circle cx="4" cy="4" r="3" fill="#1d7a2e"/></svg><svg class="a" style="left:1334px;top:677.5px;" width="8" height="8" viewBox="0 0 8 8"><circle cx="4" cy="4" r="3" fill="#1d7a2e"/></svg>
<div class="a" style="left:1352px;top:729px;width:126px;height:176px;background:#fff;border:1px solid #e54848;border-radius:3px 3px 8px 8px;box-shadow:0 1px 2px rgba(0,0,0,.06)"><div class="a" style="left:-1px;top:-1px;width:126px;height:16px;background:#fe1111;border-radius:3px 3px 0 0"></div><div class="t" style="left:-238.0px;width:600px;text-align:center;top:3.27px;font-size:7px;line-height:7px;color:#fff;font-weight:bold;">Add Suggestion</div><div class="a" style="left:4.5px;top:19px;width:113px;height:139px;background:#f7f7f7;border-radius:5px;box-shadow:0 1px 3px rgba(0,0,0,.13)"></div><div class="a" style="left:105px;top:23px;width:12px;height:12px;background:#f31f1f;border-radius:50%;box-shadow:0 0 1px rgba(0,0,0,.3)"></div><svg class="a" style="left:107.8px;top:25.8px;" width="6.4" height="6.4" viewBox="0 0 6.4 6.4"><path d="M.500 .500 L5.900 5.900 M5.900 .500 L.500 5.900" stroke="#a80d0d" stroke-width="1.200"/></svg><div class="t" style="left:12px;top:31.27px;font-size:7px;line-height:7px;color:#333;font-weight:bold;">Type of Action</div><div class="a" style="left:11.5px;top:43px;width:100px;height:16.5px;background:#fff;border:1px solid #f1b5b5;border-radius:3px;box-shadow:0 1px 1px rgba(0,0,0,.05)"></div><div class="t" style="left:18.0px;top:49.15px;font-size:6.5px;line-height:6.5px;color:#3a3a3a;font-weight:normal;">Choose action type</div><svg class="a" style="left:102.5px;top:49.25px;" width="7" height="5" viewBox="0 0 7 5"><path d="M1 1 L3.500 3.500 L6 1" fill="none" stroke="#555" stroke-width=".9"/></svg><div class="t" style="left:12px;top:62.56px;font-size:5.6px;line-height:5.6px;color:#e05a5a;font-weight:normal;">This field is required</div><div class="t" style="left:12px;top:75.57px;font-size:7px;line-height:7px;color:#333;font-weight:bold;">Suggestion Text</div><div class="a" style="left:11.5px;top:87.3px;width:100px;height:18.4px;background:#fff;border:1px solid #d3dad6;border-radius:3px;box-shadow:0 1px 1px rgba(0,0,0,.05)"></div><div class="t" style="left:16.5px;top:94.00px;font-size:6.5px;line-height:6.5px;color:#3a3a3a;font-weight:normal;">suggestion text 5</div><div class="t" style="left:12px;top:117.77px;font-size:7px;line-height:7px;color:#333;font-weight:bold;">Suggestion Postback</div><div class="a" style="left:11.5px;top:129.8px;width:100px;height:18.2px;background:#fff;border:1px solid #d3dad6;border-radius:3px;box-shadow:0 1px 1px rgba(0,0,0,.05)"></div><div class="t" style="left:16.5px;top:136.40px;font-size:6.5px;line-height:6.5px;color:#3a3a3a;font-weight:normal;">suggestion postback 5</div></div><svg class="a" style="left:1348px;top:812.5px;" width="8" height="8" viewBox="0 0 8 8"><circle cx="4" cy="4" r="3" fill="#1d7a2e"/></svg><svg class="a" style="left:1474px;top:812.5px;" width="8" height="8" viewBox="0 0 8 8"><circle cx="4" cy="4" r="3" fill="#1d7a2e"/></svg>
<div class="a" style="left:842px;top:364px;width:126px;height:100px;background:#fff;border:1px solid #6cc0ea;border-radius:3px 3px 8px 8px;box-shadow:0 1px 2px rgba(0,0,0,.06)"><div class="a" style="left:-1px;top:-1px;width:126px;height:16px;background:#4cb4e8;border-radius:3px 3px 0 0"></div><div class="t" style="left:-238.0px;width:600px;text-align:center;top:3.27px;font-size:7px;line-height:7px;color:#fff;font-weight:bold;">Fallback</div><div class="a" style="left:4px;top:19px;width:114.5px;height:76.5px;background:#f7f7f7;border-radius:5px;box-shadow:0 1px 3px rgba(0,0,0,.13)"></div><div class="a" style="left:104.6px;top:23px;width:12px;height:12px;background:#f31f1f;border-radius:50%;box-shadow:0 0 1px rgba(0,0,0,.3)"></div><svg class="a" style="left:107.39999999999999px;top:25.8px;" width="6.4" height="6.4" viewBox="0 0 6.4 6.4"><path d="M.500 .500 L5.900 5.900 M5.900 .500 L.500 5.900" stroke="#a80d0d" stroke-width="1.200"/></svg><div class="t" style="left:12px;top:31.37px;font-size:7px;line-height:7px;color:#333;font-weight:bold;">Fallback</div><div class="a" style="left:11.6px;top:43.4px;width:100.4px;height:28.6px;background:#fff;border:1px solid #f0c0c0;border-radius:3px"></div><div class="t" style="left:16.6px;top:49.90px;font-size:6.5px;line-height:6.5px;color:#3a3a3a;font-weight:normal;">suggestion postback 1</div><svg class="a" style="left:106.0px;top:66.0px;" width="5" height="5" viewBox="0 0 5 5"><path d="M4.500 1 L1 4.500 M4.500 3 L3 4.500" stroke="#888" stroke-width=".7"/></svg><div class="t" style="left:12px;top:78.46px;font-size:5.6px;line-height:5.6px;color:#e05a5a;font-weight:normal;">This field is required</div></div><svg class="a" style="left:838px;top:410px;" width="8" height="8" viewBox="0 0 8 8"><circle cx="4" cy="4" r="3" fill="#1d7a2e"/></svg><svg class="a" style="left:964px;top:410px;" width="8" height="8" viewBox="0 0 8 8"><circle cx="4" cy="4" r="3" fill="#1d7a2e"/></svg>
<div class="a" style="left:483.5px;top:308px;width:126px;height:230px;background:#fff;border:1px solid #4caf62;border-radius:3px 3px 8px 8px;box-shadow:0 1px 2px rgba(0,0,0,.06)"><div class="a" style="left:-1px;top:-1px;width:126px;height:16px;background:#2ba64b;border-radius:3px 3px 0 0"></div><div class="t" style="left:-238.0px;width:600px;text-align:center;top:3.27px;font-size:7px;line-height:7px;color:#fff;font-weight:bold;">Template</div><div class="a" style="left:4.5px;top:18px;width:114px;height:202px;background:#f7f7f7;border-radius:0 0 5px 5px;box-shadow:0 1px 3px rgba(0,0,0,.13);overflow:hidden"><div class="t" style="left:7.5px;top:-2.93px;font-size:7px;line-height:7px;color:#333;font-weight:bold;">Select Media Height</div><div class="a" style="left:7.5px;top:9.8px;width:95.7px;height:15.6px;background:#fff;border:1px solid #d3dad6;border-radius:3px;box-shadow:0 1px 1px rgba(0,0,0,.05)"></div><div class="t" style="left:14.0px;top:15.50px;font-size:6.5px;line-height:6.5px;color:#3a3a3a;font-weight:normal;">Short</div><svg class="a" style="left:94.2px;top:15.600000000000001px;" width="7" height="5" viewBox="0 0 7 5"><path d="M1 1 L3.500 3.500 L6 1" fill="none" stroke="#555" stroke-width=".9"/></svg><div class="t" style="left:7.5px;top:37.67px;font-size:7px;line-height:7px;color:#333;font-weight:bold;">Image/Video</div><div class="a" style="left:7.5px;top:49.599999999999994px;width:95.7px;height:20.6px;background:#f8f8f8;border:1px solid #d3dad6;border-radius:3px"></div><div class="a" style="left:11.5px;top:53.599999999999994px;width:41px;height:12.600000000000001px;background:#efefef;border:1px solid #b9b9b9;border-radius:2px"></div><div class="t" style="left:15.0px;top:56.70px;font-size:6.5px;line-height:6.5px;color:#222;font-weight:normal;">Choose file</div><div class="t" style="left:55.0px;top:56.70px;font-size:6.5px;line-height:6.5px;color:#222;font-weight:normal;">vts1.jpeg</div><div class="t" style="left:7.5px;top:82.47px;font-size:7px;line-height:7px;color:#333;font-weight:bold;">Card Title</div><div class="a" style="left:7.5px;top:94.6px;width:95.7px;height:17.9px;background:#fff;border:1px solid #d3dad6;border-radius:3px;box-shadow:0 1px 1px rgba(0,0,0,.05)"></div><div class="t" style="left:12.5px;top:101.05px;font-size:6.5px;line-height:6.5px;color:#3a3a3a;font-weight:normal;">card title 1</div><div class="t" style="left:7.5px;top:118.84px;font-size:5.5px;line-height:5.5px;color:#666;font-weight:normal;">Max 200 characters</div><div class="t" style="left:7.5px;top:133.37px;font-size:7px;line-height:7px;color:#333;font-weight:bold;">Card Description</div><div class="a" style="left:7.5px;top:145.6px;width:95.7px;height:48.9px;background:#fff;border:1px solid #d3dad6;border-radius:3px"></div><div class="t" style="left:12.5px;top:152.10px;font-size:6.5px;line-height:6.5px;color:#3a3a3a;font-weight:normal;">card description 1</div><svg class="a" style="left:97.2px;top:188.5px;" width="5" height="5" viewBox="0 0 5 5"><path d="M4.500 1 L1 4.500 M4.500 3 L3 4.500" stroke="#888" stroke-width=".7"/></svg><div class="a" style="left:111.5px;top:80px;width:4px;height:112px;background:#c1c1c1;border-radius:2px"></div></div></div><svg class="a" style="left:479.5px;top:419px;" width="8" height="8" viewBox="0 0 8 8"><circle cx="4" cy="4" r="3" fill="#1d7a2e"/></svg><svg class="a" style="left:605.5px;top:419px;" width="8" height="8" viewBox="0 0 8 8"><circle cx="4" cy="4" r="3" fill="#1d7a2e"/></svg>
<div class="a" style="left:1002px;top:279.5px;width:126px;height:230px;background:#fff;border:1px solid #4caf62;border-radius:3px 3px 8px 8px;box-shadow:0 1px 2px rgba(0,0,0,.06)"><div class="a" style="left:-1px;top:-1px;width:126px;height:16px;background:#2ba64b;border-radius:3px 3px 0 0"></div><div class="t" style="left:-238.0px;width:600px;text-align:center;top:3.27px;font-size:7px;line-height:7px;color:#fff;font-weight:bold;">Template</div><div class="a" style="left:4.5px;top:16.5px;width:114px;height:203.5px;background:#f7f7f7;border-radius:0 0 5px 5px;box-shadow:0 1px 3px rgba(0,0,0,.13);overflow:hidden"><div class="a" style="left:6.800000000000001px;top:-4.5px;width:96.5px;height:16px;background:#fff;border:1px solid #d3dad6;border-radius:3px;box-shadow:0 1px 1px rgba(0,0,0,.05)"></div><div class="t" style="left:13.3px;top:1.40px;font-size:6.5px;line-height:6.5px;color:#3a3a3a;font-weight:normal;">Short</div><svg class="a" style="left:94.3px;top:1.5px;" width="7" height="5" viewBox="0 0 7 5"><path d="M1 1 L3.500 3.500 L6 1" fill="none" stroke="#555" stroke-width=".9"/></svg><div class="t" style="left:6.800000000000001px;top:24.07px;font-size:7px;line-height:7px;color:#333;font-weight:bold;">Image/Video</div><div class="a" style="left:6.800000000000001px;top:35.5px;width:96.5px;height:20.5px;background:#f8f8f8;border:1px solid #d3dad6;border-radius:3px"></div><div class="a" style="left:10.8px;top:39.5px;width:41px;height:12.5px;background:#efefef;border:1px solid #b9b9b9;border-radius:2px"></div><div class="t" style="left:14.3px;top:42.55px;font-size:6.5px;line-height:6.5px;color:#222;font-weight:normal;">Choose file</div><div class="t" style="left:54.3px;top:42.55px;font-size:6.5px;line-height:6.5px;color:#222;font-weight:normal;">uwp4....14.png</div><div class="t" style="left:6.800000000000001px;top:69.07px;font-size:7px;line-height:7px;color:#333;font-weight:bold;">Card Title</div><div class="a" style="left:6.800000000000001px;top:80.5px;width:96.5px;height:18.5px;background:#fff;border:1px solid #d3dad6;border-radius:3px;box-shadow:0 1px 1px rgba(0,0,0,.05)"></div><div class="t" style="left:11.8px;top:87.25px;font-size:6.5px;line-height:6.5px;color:#3a3a3a;font-weight:normal;">card title 2</div><div class="t" style="left:6.800000000000001px;top:105.34px;font-size:5.5px;line-height:5.5px;color:#666;font-weight:normal;">Max 200 characters</div><div class="t" style="left:6.800000000000001px;top:120.07px;font-size:7px;line-height:7px;color:#333;font-weight:bold;">Card Description</div><div class="a" style="left:6.800000000000001px;top:131.0px;width:96.5px;height:49.5px;background:#fff;border:1px solid #d3dad6;border-radius:3px"></div><div class="t" style="left:11.8px;top:137.50px;font-size:6.5px;line-height:6.5px;color:#3a3a3a;font-weight:normal;">card description 2</div><svg class="a" style="left:97.3px;top:174.5px;" width="5" height="5" viewBox="0 0 5 5"><path d="M4.500 1 L1 4.500 M4.500 3 L3 4.500" stroke="#888" stroke-width=".7"/></svg><div class="t" style="left:6.800000000000001px;top:190.34px;font-size:5.5px;line-height:5.5px;color:#666;font-weight:normal;">Max 200 characters</div><div class="a" style="left:111.5px;top:89.0px;width:4px;height:113.0px;background:#c1c1c1;border-radius:2px"></div></div></div><svg class="a" style="left:998px;top:390.5px;" width="8" height="8" viewBox="0 0 8 8"><circle cx="4" cy="4" r="3" fill="#1d7a2e"/></svg><svg class="a" style="left:1124px;top:390.5px;" width="8" height="8" viewBox="0 0 8 8"><circle cx="4" cy="4" r="3" fill="#1d7a2e"/></svg>
<div class="a" style="left:997px;top:549.5px;width:126px;height:230px;background:#fff;border:1px solid #4caf62;border-radius:3px 3px 8px 8px;box-shadow:0 1px 2px rgba(0,0,0,.06)"><div class="a" style="left:-1px;top:-1px;width:126px;height:16px;background:#2ba64b;border-radius:3px 3px 0 0"></div><div class="t" style="left:-238.0px;width:600px;text-align:center;top:3.27px;font-size:7px;line-height:7px;color:#fff;font-weight:bold;">Template</div><div class="a" style="left:4.5px;top:16.5px;width:114px;height:203.5px;background:#f7f7f7;border-radius:0 0 5px 5px;box-shadow:0 1px 3px rgba(0,0,0,.13);overflow:hidden"><div class="t" style="left:6.800000000000001px;top:1.32px;font-size:7px;line-height:7px;color:#333;font-weight:bold;">Template Type</div><div class="a" style="left:6.800000000000001px;top:14.0px;width:96.5px;height:15px;background:#fff;border:1px solid #d3dad6;border-radius:3px;box-shadow:0 1px 1px rgba(0,0,0,.05)"></div><div class="t" style="left:13.3px;top:19.40px;font-size:6.5px;line-height:6.5px;color:#3a3a3a;font-weight:normal;">Rich Card Stand Alone</div><svg class="a" style="left:94.3px;top:19.5px;" width="7" height="5" viewBox="0 0 7 5"><path d="M1 1 L3.500 3.500 L6 1" fill="none" stroke="#555" stroke-width=".9"/></svg><div class="t" style="left:6.800000000000001px;top:41.32px;font-size:7px;line-height:7px;color:#333;font-weight:bold;">Select Card Orientation</div><div class="a" style="left:6.800000000000001px;top:53.5px;width:96.5px;height:15.5px;background:#fff;border:1px solid #d3dad6;border-radius:3px;box-shadow:0 1px 1px rgba(0,0,0,.05)"></div><div class="t" style="left:13.3px;top:59.15px;font-size:6.5px;line-height:6.5px;color:#3a3a3a;font-weight:normal;">Vertical</div><svg class="a" style="left:94.3px;top:59.25px;" width="7" height="5" viewBox="0 0 7 5"><path d="M1 1 L3.500 3.500 L6 1" fill="none" stroke="#555" stroke-width=".9"/></svg><div class="t" style="left:6.800000000000001px;top:81.32px;font-size:7px;line-height:7px;color:#333;font-weight:bold;">Select Media Height</div><div class="a" style="left:6.800000000000001px;top:93.0px;width:96.5px;height:16px;background:#fff;border:1px solid #d3dad6;border-radius:3px;box-shadow:0 1px 1px rgba(0,0,0,.05)"></div><div class="t" style="left:13.3px;top:98.90px;font-size:6.5px;line-height:6.5px;color:#3a3a3a;font-weight:normal;">Short</div><svg class="a" style="left:94.3px;top:99.0px;" width="7" height="5" viewBox="0 0 7 5"><path d="M1 1 L3.500 3.500 L6 1" fill="none" stroke="#555" stroke-width=".9"/></svg><div class="t" style="left:6.800000000000001px;top:120.82px;font-size:7px;line-height:7px;color:#333;font-weight:bold;">Image/Video</div><div class="a" style="left:6.800000000000001px;top:132.5px;width:96.5px;height:20.5px;background:#f8f8f8;border:1px solid #d3dad6;border-radius:3px"></div><div class="a" style="left:10.8px;top:136.5px;width:41px;height:12.5px;background:#efefef;border:1px solid #b9b9b9;border-radius:2px"></div><div class="t" style="left:14.3px;top:139.55px;font-size:6.5px;line-height:6.5px;color:#222;font-weight:normal;">Choose file</div><div class="t" style="left:54.3px;top:139.55px;font-size:6.5px;line-height:6.5px;color:#222;font-weight:normal;">uwp4....14.png</div><div class="t" style="left:6.800000000000001px;top:165.82px;font-size:7px;line-height:7px;color:#333;font-weight:bold;">Card Title</div><div class="a" style="left:6.800000000000001px;top:177.5px;width:96.5px;height:18px;background:#fff;border:1px solid #d3dad6;border-radius:3px;box-shadow:0 1px 1px rgba(0,0,0,.05)"></div><div class="t" style="left:11.8px;top:184.00px;font-size:6.5px;line-height:6.5px;color:#3a3a3a;font-weight:normal;">card title 3</div><div class="a" style="left:111.5px;top:34.0px;width:4px;height:112.0px;background:#c1c1c1;border-radius:2px"></div></div></div><svg class="a" style="left:993px;top:660.5px;" width="8" height="8" viewBox="0 0 8 8"><circle cx="4" cy="4" r="3" fill="#1d7a2e"/></svg><svg class="a" style="left:1119px;top:660.5px;" width="8" height="8" viewBox="0 0 8 8"><circle cx="4" cy="4" r="3" fill="#1d7a2e"/></svg>
<svg class="a" style="left:0;top:0" width="1600" height="1000"><defs><marker id="ar" viewBox="0 0 10 10" refX="10" refY="5" markerWidth="6.5" markerHeight="6" markerUnits="userSpaceOnUse" orient="auto"><path d="M0 0 L10 5 L0 10z" fill="#2a7de8"/></marker></defs><path d="M609.5 423 L688.87 383.07" stroke="#3f87e4" stroke-width="1.300" fill="none" marker-end="url(#ar)"/><path d="M609.5 423 L700.19 573.50" stroke="#3f87e4" stroke-width="1.300" fill="none" marker-end="url(#ar)"/><path d="M818 381.5 L839.92 411.18" stroke="#3f87e4" stroke-width="1.300" fill="none" marker-end="url(#ar)"/><path d="M828 576.5 L890.71 418.25" stroke="#3f87e4" stroke-width="1.300" fill="none" marker-end="url(#ar)"/><path d="M968 414 L998.96 396.24" stroke="#3f87e4" stroke-width="1.300" fill="none" marker-end="url(#ar)"/><path d="M968 414 L996.60 660.52" stroke="#3f87e4" stroke-width="1.300" fill="none" marker-end="url(#ar)"/><path d="M1128 394.5 L1258.67 352.57" stroke="#3f87e4" stroke-width="1.300" fill="none" marker-end="url(#ar)"/><path d="M1128 394.5 L1398.85 524.98" stroke="#3f87e4" stroke-width="1.300" fill="none" marker-end="url(#ar)"/><path d="M1122.3 664 L1208.56 680.83" stroke="#3f87e4" stroke-width="1.300" fill="none" marker-end="url(#ar)"/><path d="M1122.3 664 L1349.08 814.56" stroke="#3f87e4" stroke-width="1.300" fill="none" marker-end="url(#ar)"/></svg>
<svg class="a" style="left:605.5px;top:419px;" width="8" height="8" viewBox="0 0 8 8"><circle cx="4" cy="4" r="3" fill="#1d7a2e"/></svg>
<svg class="a" style="left:688px;top:377.5px;" width="8" height="8" viewBox="0 0 8 8"><circle cx="4" cy="4" r="3" fill="#1d7a2e"/></svg>
<svg class="a" style="left:698px;top:572.5px;" width="8" height="8" viewBox="0 0 8 8"><circle cx="4" cy="4" r="3" fill="#1d7a2e"/></svg>
<svg class="a" style="left:814px;top:377.5px;" width="8" height="8" viewBox="0 0 8 8"><circle cx="4" cy="4" r="3" fill="#1d7a2e"/></svg>
<svg class="a" style="left:824px;top:572.5px;" width="8" height="8" viewBox="0 0 8 8"><circle cx="4" cy="4" r="3" fill="#1d7a2e"/></svg>
<svg class="a" style="left:838px;top:410px;" width="8" height="8" viewBox="0 0 8 8"><circle cx="4" cy="4" r="3" fill="#1d7a2e"/></svg>
<svg class="a" style="left:964px;top:410px;" width="8" height="8" viewBox="0 0 8 8"><circle cx="4" cy="4" r="3" fill="#1d7a2e"/></svg>
<svg class="a" style="left:998px;top:390.5px;" width="8" height="8" viewBox="0 0 8 8"><circle cx="4" cy="4" r="3" fill="#1d7a2e"/></svg>
<svg class="a" style="left:993px;top:660px;" width="8" height="8" viewBox="0 0 8 8"><circle cx="4" cy="4" r="3" fill="#1d7a2e"/></svg>
<svg class="a" style="left:1124px;top:390.5px;" width="8" height="8" viewBox="0 0 8 8"><circle cx="4" cy="4" r="3" fill="#1d7a2e"/></svg>
<svg class="a" style="left:1258px;top:347.5px;" width="8" height="8" viewBox="0 0 8 8"><circle cx="4" cy="4" r="3" fill="#1d7a2e"/></svg>
<svg class="a" style="left:1398px;top:522.5px;" width="8" height="8" viewBox="0 0 8 8"><circle cx="4" cy="4" r="3" fill="#1d7a2e"/></svg>
<svg class="a" style="left:1118.3px;top:660px;" width="8" height="8" viewBox="0 0 8 8"><circle cx="4" cy="4" r="3" fill="#1d7a2e"/></svg>
<svg class="a" style="left:1208px;top:677.5px;" width="8" height="8" viewBox="0 0 8 8"><circle cx="4" cy="4" r="3" fill="#1d7a2e"/></svg>
<svg class="a" style="left:1348px;top:812.5px;" width="8" height="8" viewBox="0 0 8 8"><circle cx="4" cy="4" r="3" fill="#1d7a2e"/></svg>
</div>
<div class="a" style="left:32px;top:944px;width:1536px;height:50px;background:#151515;border:1px solid #3b3b3b;border-radius:13px"></div>
<div class="a" style="left:39px;top:951px;width:32px;height:32px;border-radius:7px;background:linear-gradient(90deg,#1e9bf0 50%,#e8eef3 50%);overflow:hidden"><svg class="a" style="left:0;top:0" width="32" height="32" viewBox="0 0 32 32"><path d="M16 0 Q12 16 16 32" stroke="#1a3b6b" stroke-width="1" fill="none"/><circle cx="10" cy="11" r="1.300" fill="#1a2a4a"/><circle cx="22" cy="11" r="1.300" fill="#1a2a4a"/><path d="M7 21 Q16 27 25 21" stroke="#1a2a4a" stroke-width="1.400" fill="none"/></svg></div>
<div class="a" style="left:81px;top:951px;width:32px;height:32px;border-radius:7px;background:#a7a7ad;overflow:hidden"><svg class="a" style="left:0;top:0" width="32" height="32" viewBox="0 0 32 32"><rect x="6.0" y="6.0" width="5.500" height="5.500" rx="1.500" fill="#3ec84d"/><rect x="13.5" y="6.0" width="5.500" height="5.500" rx="1.500" fill="#f5c63a"/><rect x="21.0" y="6.0" width="5.500" height="5.500" rx="1.500" fill="#f08a2a"/><rect x="6.0" y="13.5" width="5.500" height="5.500" rx="1.500" fill="#e93f3b"/><rect x="13.5" y="13.5" width="5.500" height="5.500" rx="1.500" fill="#c0c0c8"/><rect x="21.0" y="13.5" width="5.500" height="5.500" rx="1.500" fill="#e94f8a"/><rect x="6.0" y="21.0" width="5.500" height="5.500" rx="1.500" fill="#9b59d0"/><rect x="13.5" y="21.0" width="5.500" height="5.500" rx="1.500" fill="#2f9af0"/><rect x="21.0" y="21.0" width="5.500" height="5.500" rx="1.500" fill="#3ecfc0"/></svg></div>
<div class="a" style="left:122px;top:951px;width:32px;height:32px;border-radius:7px;background:#f1f1f3;overflow:hidden"><svg class="a" style="left:0;top:0" width="32" height="32" viewBox="0 0 32 32"><circle cx="16" cy="16" r="12" fill="#1b8cf2"/><circle cx="16" cy="16" r="12" fill="none" stroke="#dfe6ee" stroke-width="1"/><path d="M22 10 L17.500 17.500 L10 22 L14.500 14.500Z" fill="#fff"/><path d="M22 10 L17.500 17.500 L14.500 14.500Z" fill="#f0473c"/></svg></div>
<div class="a" style="left:164px;top:951px;width:32px;height:32px;border-radius:7px;background:linear-gradient(#5de96a,#2fbf3f);overflow:hidden"><svg class="a" style="left:0;top:0" width="32" height="32" viewBox="0 0 32 32"><ellipse cx="16" cy="15" rx="10.500" ry="8.500" fill="#fff"/><path d="M9 20 L7 25 L13 22Z" fill="#fff"/></svg></div>
<div class="a" style="left:205px;top:951px;width:32px;height:32px;border-radius:7px;background:linear-gradient(#48b2fb,#1a72e8);overflow:hidden"><svg class="a" style="left:0;top:0" width="32" height="32" viewBox="0 0 32 32"><rect x="7" y="10" width="18" height="13" rx="1.500" fill="#f3f6fa"/><path d="M7 10.500 L16 17.500 L25 10.500" stroke="#9cb4cf" stroke-width="1" fill="none"/></svg></div>
<div class="a" style="left:247px;top:951px;width:32px;height:32px;border-radius:7px;background:#eaf3e6;overflow:hidden"><svg class="a" style="left:0;top:0" width="32" height="32" viewBox="0 0 32 32"><path d="M0 20 Q10 14 16 18 T32 10 V32 H0Z" fill="#f3a6c9"/><path d="M14 0 H19 V32 H14Z" fill="#3a8df0"/><path d="M22 0 Q26 12 32 14 V0Z" fill="#73d08a"/><circle cx="16" cy="21" r="5" fill="#2f7de6" stroke="#fff" stroke-width="1.500"/><path d="M16 17.500 L19 24 L16 22.500 L13 24Z" fill="#fff"/><path d="M24 26 H32 V32 H22Z" fill="#f5c842"/></svg></div>
<div class="a" style="left:288px;top:951px;width:32px;height:32px;border-radius:7px;background:linear-gradient(#5de96a,#2fbf3f);overflow:hidden"><svg class="a" style="left:0;top:0" width="32" height="32" viewBox="0 0 32 32"><rect x="6" y="11" width="14" height="11" rx="2.500" fill="#fff"/><path d="M21 15 L26 11.500 V21.500 L21 18Z" fill="#fff"/></svg></div>
<div class="a" style="left:330px;top:951px;width:32px;height:32px;border-radius:7px;background:#fafafa;overflow:hidden"><svg class="a" style="left:0;top:0" width="32" height="32" viewBox="0 0 32 32"><rect x="0" y="0" width="32" height="9" fill="#f04b42"/><text x="16" y="7.500" font-size="6" font-family="Liberation Sans" font-weight="bold" fill="#fff" text-anchor="middle">MAR</text><text x="16" y="27.500" font-size="17" font-family="Liberation Sans" fill="#333" text-anchor="middle">21</text></svg></div>
<div class="a" style="left:371px;top:951px;width:32px;height:32px;border-radius:7px;background:linear-gradient(#c79a63,#a67b45);overflow:hidden"><svg class="a" style="left:0;top:0" width="32" height="32" viewBox="0 0 32 32"><circle cx="16" cy="16" r="9" fill="none" stroke="#8d6535" stroke-width="1.200"/><circle cx="16" cy="13.500" r="3" fill="#8d6535"/><path d="M10.500 22 Q16 15 21.500 22" fill="#8d6535"/><rect x="29" y="8" width="2" height="5" fill="#e79a3c"/><rect x="29" y="15" width="2" height="5" fill="#5a9be6"/></svg></div>
<div class="a" style="left:412px;top:951px;width:32px;height:32px;border-radius:7px;background:#fbfbfb;overflow:hidden"><svg class="a" style="left:0;top:0" width="32" height="32" viewBox="0 0 32 32"><circle cx="7" cy="9" r="2.200" fill="#3a7ef0"/><circle cx="7" cy="16" r="2.200" fill="#f0473c"/><circle cx="7" cy="23" r="2.200" fill="#f5a23a"/><path d="M12 9 H26 M12 16 H26 M12 23 H26" stroke="#ddd" stroke-width="1"/></svg></div>
<div class="a" style="left:454px;top:951px;width:32px;height:32px;border-radius:7px;background:linear-gradient(#ffd84a 0,#ffd84a 26%,#f6f4ee 26%);overflow:hidden"><svg class="a" style="left:0;top:0" width="32" height="32" viewBox="0 0 32 32"><path d="M5 14 H27 M5 19 H27 M5 24 H27" stroke="#e4e0d6" stroke-width=".8"/></svg></div>
<div class="a" style="left:495px;top:951px;width:32px;height:32px;border-radius:7px;background:#fafafa;overflow:hidden"><svg class="a" style="left:0;top:0" width="32" height="32" viewBox="0 0 32 32"><rect x="10" y="4" width="17" height="16" fill="#5ac8fa"/><circle cx="13" cy="20" r="8" fill="#f26b3a"/><path d="M6 19 Q10 9 14 17 T22 13 T27 17" stroke="#1a3a6e" stroke-width="2.200" fill="none"/></svg></div>
<div class="a" style="left:536px;top:951px;width:32px;height:32px;border-radius:7px;background:#1e1e1e;overflow:hidden"><svg class="a" style="left:0;top:0" width="32" height="32" viewBox="0 0 32 32"><rect x=".800" y=".800" width="30.400" height="30.400" rx="6.500" fill="none" stroke="#aaa" stroke-width="1.200"/><path d="M6 7 L9.500 9.500 L6 12" stroke="#eee" stroke-width="1.200" fill="none"/><path d="M10.500 12.500 H15" stroke="#eee" stroke-width="1.200"/></svg></div>
<div class="a" style="left:578px;top:951px;width:32px;height:32px;border-radius:7px;background:#171c1c;overflow:hidden"><svg class="a" style="left:0;top:0" width="32" height="32" viewBox="0 0 32 32"><path fill="#fff" transform="translate(4.500 9.500) scale(.62)" d="M12.600 3.200c.8-1 1.300-2.200 1.200-3.200-1.100.1-2.300.7-3.100 1.600-.7.8-1.300 2-1.100 3.100 1.100.1 2.300-.6 3-1.500zM15 10.400c0-2.200 1.800-3.200 1.900-3.300-1-1.500-2.600-1.700-3.200-1.700-1.400-.1-2.600.8-3.300.8-.7 0-1.700-.8-2.900-.8C6 5.400 4.600 6.300 3.800 7.600c-1.600 2.800-.4 6.900 1.200 9.100.8 1.100 1.700 2.300 2.900 2.300 1.100 0 1.600-.7 2.900-.7 1.400 0 1.700.7 2.900.7 1.200 0 2-1.100 2.700-2.200.9-1.200 1.200-2.400 1.200-2.500-.1 0-2.600-1-2.600-3.900z"/><text x="21" y="21" font-size="11" font-family="Liberation Sans" font-weight="bold" fill="#fff" text-anchor="middle">tv</text></svg></div>
<div class="a" style="left:619px;top:951px;width:32px;height:32px;border-radius:7px;background:linear-gradient(#fb5c74,#e8253f);overflow:hidden"><svg class="a" style="left:0;top:0" width="32" height="32" viewBox="0 0 32 32"><path d="M13 9 L23 7 V20" stroke="#fff" stroke-width="2" fill="none"/><path d="M13 9 V22" stroke="#fff" stroke-width="2"/><ellipse cx="10.500" cy="22.500" rx="3" ry="2.500" fill="#fff"/><ellipse cx="20.500" cy="20.500" rx="3" ry="2.500" fill="#fff"/></svg></div>
<div class="a" style="left:661px;top:951px;width:32px;height:32px;border-radius:7px;background:linear-gradient(#5de96a,#25b43a);overflow:hidden"><svg class="a" style="left:0;top:0" width="32" height="32" viewBox="0 0 32 32"><rect x="7" y="19" width="3" height="7" fill="#fff"/><rect x="12" y="14" width="3" height="12" fill="#fff"/><rect x="17" y="8" width="3" height="18" fill="#fff"/><rect x="22" y="12" width="3" height="14" fill="#fff"/></svg></div>
<div class="a" style="left:702px;top:951px;width:32px;height:32px;border-radius:7px;background:linear-gradient(#ffb341,#f7901e);overflow:hidden"><svg class="a" style="left:0;top:0" width="32" height="32" viewBox="0 0 32 32"><path d="M8 26 L24 7 L26 9 L10 27Z" fill="#f7e5c6"/></svg></div>
<div class="a" style="left:744px;top:951px;width:32px;height:32px;border-radius:7px;background:linear-gradient(#2ea8fb,#1b6ee8);overflow:hidden"><svg class="a" style="left:0;top:0" width="32" height="32" viewBox="0 0 32 32"><path d="M16 6 L8 22 M16 6 L24 22 M6 18 H26" stroke="#fff" stroke-width="2.200" stroke-linecap="round"/></svg></div>
<div class="a" style="left:785px;top:951px;width:32px;height:32px;border-radius:7px;background:linear-gradient(#9a9a9f,#6c6c71);overflow:hidden"><svg class="a" style="left:0;top:0" width="32" height="32" viewBox="0 0 32 32"><circle cx="16" cy="16" r="11" fill="#48484c" stroke="#c8c8cc" stroke-width="1.500"/><circle cx="16" cy="16" r="4" fill="none" stroke="#c8c8cc" stroke-width="2"/><path d="M16 5 V12 M6.500 21.500 L12.500 18 M25.500 21.500 L19.500 18" stroke="#c8c8cc" stroke-width="2"/></svg></div>
<div class="a" style="left:827px;top:951px;width:32px;height:32px;border-radius:7px;background:linear-gradient(#bdbdc2,#8f8f94);overflow:hidden"><svg class="a" style="left:0;top:0" width="32" height="32" viewBox="0 0 32 32"><rect x="10" y="4" width="12" height="24" rx="2.500" fill="#0f3a70"/><path d="M11 6 L21 6 L21 16 Q15 26 11 20Z" fill="#e84c5a"/><path d="M21 14 L21 26 L11 26Z" fill="#5aa7f0"/></svg></div>
<div class="a" style="left:887px;top:951px;width:32px;height:32px;border-radius:7px;background:#f1f1f1;overflow:hidden"><svg class="a" style="left:0;top:0" width="32" height="32" viewBox="0 0 32 32"><path d="M16 16 L4.720 11.900 A12 12 0 0 1 27.280 11.900Z" fill="#e94235"/><path d="M16 16 L27.280 11.900 A12 12 0 0 1 13.920 27.820Z" fill="#fbc02d"/><path d="M16 16 L13.920 27.820 A12 12 0 0 1 4.720 11.900Z" fill="#34a853"/><circle cx="16" cy="16" r="5.500" fill="#fff"/><circle cx="16" cy="16" r="4.300" fill="#4285f4"/></svg></div>
<div class="a" style="left:928px;top:951px;width:32px;height:32px;border-radius:7px;background:linear-gradient(#ff7a45,#f0561f);overflow:hidden"><svg class="a" style="left:0;top:0" width="32" height="32" viewBox="0 0 32 32"><path d="M9 23 L13 19 L17 21 L24 9" stroke="#fff" stroke-width="2" fill="none"/><circle cx="23" cy="9" r="2.500" fill="#fff"/></svg></div>
<div class="a" style="left:969px;top:951px;width:32px;height:32px;border-radius:7px;background:linear-gradient(#fbe98a,#efd35a);overflow:hidden"><svg class="a" style="left:0;top:0" width="32" height="32" viewBox="0 0 32 32"><path d="M7 14 Q10 10 13 14 T19 13 T25 14" stroke="#b5992e" stroke-width="1" fill="none"/><path d="M7 19 H24" stroke="#b5992e" stroke-width=".8"/></svg></div>
<div class="a" style="left:1011px;top:951px;width:32px;height:32px;border-radius:7px;background:transparent;overflow:hidden"><svg class="a" style="left:0;top:0" width="32" height="32" viewBox="0 0 32 32"><path d="M16 1 L28 29 H4Z" fill="#f7861c"/><path d="M10 14 H22 L23.500 18 H8.500Z M7 22 H25 L26.500 26 H5.500Z" fill="#fff"/><rect x="2" y="27" width="28" height="4" rx="1" fill="#f7861c"/></svg></div>
<div class="a" style="left:1053px;top:951px;width:32px;height:32px;border-radius:7px;background:linear-gradient(#5de96a,#25b43a);overflow:hidden"><svg class="a" style="left:0;top:0" width="32" height="32" viewBox="0 0 32 32"><circle cx="16" cy="15.500" r="10" fill="#fff"/><circle cx="16" cy="15.500" r="8.200" fill="#2fc14a"/><path d="M7 26 L8.500 21 L11 23.500Z" fill="#fff"/><path d="M12.500 11 q0 6 7 8.500 l1.500-1.500 -2-1.500 -1 1 q-2.500-1-3.500-3.500 l1-1 -1.500-2Z" fill="#fff"/></svg></div>
<div class="a" style="left:1094px;top:951px;width:32px;height:32px;border-radius:7px;background:linear-gradient(#2ea8fb,#1b6ee8);overflow:hidden"><svg class="a" style="left:0;top:0" width="32" height="32" viewBox="0 0 32 32"><path d="M16 6 L8 22 M16 6 L24 22 M6 18 H26" stroke="#cfe4fb" stroke-width="1.800" stroke-linecap="round"/><path d="M10 30 L24 2" stroke="#3b3b40" stroke-width="4"/><rect x="17" y="-1" width="12" height="6" transform="rotate(30 23 2)" fill="#5a5a60"/></svg></div>
<div class="a" style="left:1136px;top:951px;width:32px;height:32px;border-radius:7px;background:#fafafa;overflow:hidden"><svg class="a" style="left:0;top:0" width="32" height="32" viewBox="0 0 32 32"><path d="M22 4 L27 6.500 V25.500 L22 28 L9 17 L5 20 L3 19 V13 L5 12 L9 15 L22 4 Z" fill="#1f8ad2"/><path d="M22 9 L14 16 L22 23Z" fill="#fafafa"/></svg></div>
<div class="a" style="left:1177px;top:951px;width:32px;height:32px;border-radius:7px;background:#fafafa;overflow:hidden"><svg class="a" style="left:0;top:0" width="32" height="32" viewBox="0 0 32 32"><circle cx="16" cy="16" r="12.500" fill="#2ca5e0"/><path d="M8 15.500 L23 9.500 L20.500 23 L15.500 19 L13 21.500 L13.500 17.500 L21 11.500 L12 16.500Z" fill="#fff"/></svg></div>
<div class="a" style="left:53px;top:987.5px;width:4px;height:4px;background:#8a8a8a;border-radius:50%"></div>
<div class="a" style="left:136px;top:987.5px;width:4px;height:4px;background:#8a8a8a;border-radius:50%"></div>
<div class="a" style="left:219px;top:987.5px;width:4px;height:4px;background:#8a8a8a;border-radius:50%"></div>
<div class="a" style="left:468px;top:987.5px;width:4px;height:4px;background:#8a8a8a;border-radius:50%"></div>
<div class="a" style="left:550px;top:987.5px;width:4px;height:4px;background:#8a8a8a;border-radius:50%"></div>
<div class="a" style="left:799px;top:987.5px;width:4px;height:4px;background:#8a8a8a;border-radius:50%"></div>
<div class="a" style="left:901px;top:987.5px;width:4px;height:4px;background:#8a8a8a;border-radius:50%"></div>
<div class="a" style="left:942px;top:987.5px;width:4px;height:4px;background:#8a8a8a;border-radius:50%"></div>
<div class="a" style="left:983px;top:987.5px;width:4px;height:4px;background:#8a8a8a;border-radius:50%"></div>
<div class="a" style="left:1025px;top:987.5px;width:4px;height:4px;background:#8a8a8a;border-radius:50%"></div>
<div class="a" style="left:1067px;top:987.5px;width:4px;height:4px;background:#8a8a8a;border-radius:50%"></div>
<div class="a" style="left:1108px;top:987.5px;width:4px;height:4px;background:#8a8a8a;border-radius:50%"></div>
<div class="a" style="left:1150px;top:987.5px;width:4px;height:4px;background:#8a8a8a;border-radius:50%"></div>
<div class="a" style="left:1191px;top:987.5px;width:4px;height:4px;background:#8a8a8a;border-radius:50%"></div>
<div class="a" style="left:217px;top:947px;width:25px;height:15px;background:#ef3b35;border-radius:7.5px"></div>
<div class="t" style="left:-70.5px;width:600px;text-align:center;top:950.52px;font-size:8.6px;line-height:8.6px;color:#fff;font-weight:normal;">2,020</div>
<div class="a" style="left:807px;top:947px;width:12px;height:12px;background:#ef3b35;border-radius:50%"></div>
<div class="t" style="left:513px;width:600px;text-align:center;top:948.88px;font-size:9px;line-height:9px;color:#fff;font-weight:normal;">2</div>
<div class="a" style="left:873.5px;top:952px;width:1px;height:36px;background:#4a4a4a"></div>
<div class="a" style="left:1224.5px;top:952px;width:1px;height:36px;background:#4a4a4a"></div>
<div class="a" style="left:1241px;top:948px;width:25px;height:36px;background:#f3f3f3;border-radius:2px;clip-path:polygon(0 0,68% 0,100% 25%,100% 100%,0 100%)"></div>
<svg class="a" style="left:1245px;top:957px;" width="17" height="18" viewBox="0 0 17 18"><path d="M8.500 1 L15 16 H2Z" fill="#f7861c"/><path d="M6 8 H11 L12 11 H5Z" fill="#fff"/></svg>
<div class="t" style="left:953.5px;width:600px;text-align:center;top:977.34px;font-size:5.5px;line-height:5.5px;color:#444;font-weight:bold;">MKV</div>
<div class="a" style="left:1300.5px;top:972.5px;width:12px;height:11.5px;background:linear-gradient(#2ea8fb,#1b6ee8);border-radius:2.500px"></div>
<div class="a" style="left:1342.5px;top:972.5px;width:12px;height:11.5px;background:#f1f1f3;border-radius:2.500px;box-shadow:inset 0 0 0 1.500px #f1f1f3,inset 0 0 0 6px #2f8df0"></div>
<div class="a" style="left:1383.5px;top:972.5px;width:12px;height:11.5px;background:linear-gradient(#48b2fb,#1a72e8);border-radius:2.500px"></div>
<div class="a" style="left:1403px;top:948px;width:32px;height:37px;background:#1c1f22"></div>
<div class="a" style="left:1405px;top:955px;width:8px;height:28px;background:#23272b"></div>
<div class="a" style="left:1405px;top:960px;width:6px;height:2px;background:#3d6fd0"></div>
<div class="a" style="left:1415px;top:954px;width:18px;height:1px;background:#444"></div>
<div class="a" style="left:1425px;top:972.5px;width:12px;height:12px;background:#8e8e92;border-radius:3px"></div>
<div class="a" style="left:1443px;top:958px;width:37px;height:17px;background:#1c1f22"></div>
<div class="a" style="left:1445px;top:961px;width:30px;height:1px;background:#4a4a4a"></div>
<div class="a" style="left:1467px;top:972.5px;width:12px;height:12px;background:#f5f2e6;border-radius:3px;box-shadow:inset 0 3px 0 #ffd84a"></div>
<div class="a" style="left:1484px;top:952.5px;width:36px;height:28px;background:#1a1d1f"></div>
<div class="a" style="left:1494px;top:956px;width:24px;height:1.5px;background:#3a3a3a"></div>
<div class="a" style="left:1500px;top:963px;width:17px;height:3px;background:#2c6b4e"></div>
<div class="a" style="left:1508px;top:972.5px;width:12px;height:12px;background:#2fc14a;border-radius:3px"></div>
<svg class="a" style="left:1529px;top:947px;" width="29" height="38" viewBox="0 0 29 38"><path d="M2 7 H27 L24 37 H5Z" fill="#6c6c70"/><path d="M2 7 H27 L24 37 H5Z" fill="url(#trg)"/><defs><linearGradient id="trg" x1="0" x2="1"><stop offset="0" stop-color="#555"/><stop offset=".5" stop-color="#8a8a8e"/><stop offset="1" stop-color="#505054"/></linearGradient></defs><ellipse cx="14.500" cy="7" rx="12.500" ry="3" fill="#9a9aa0"/><path d="M6 6 q3-6 7-3 q4-4 9 2" fill="#e9e9ec"/></svg>
</body></html>
